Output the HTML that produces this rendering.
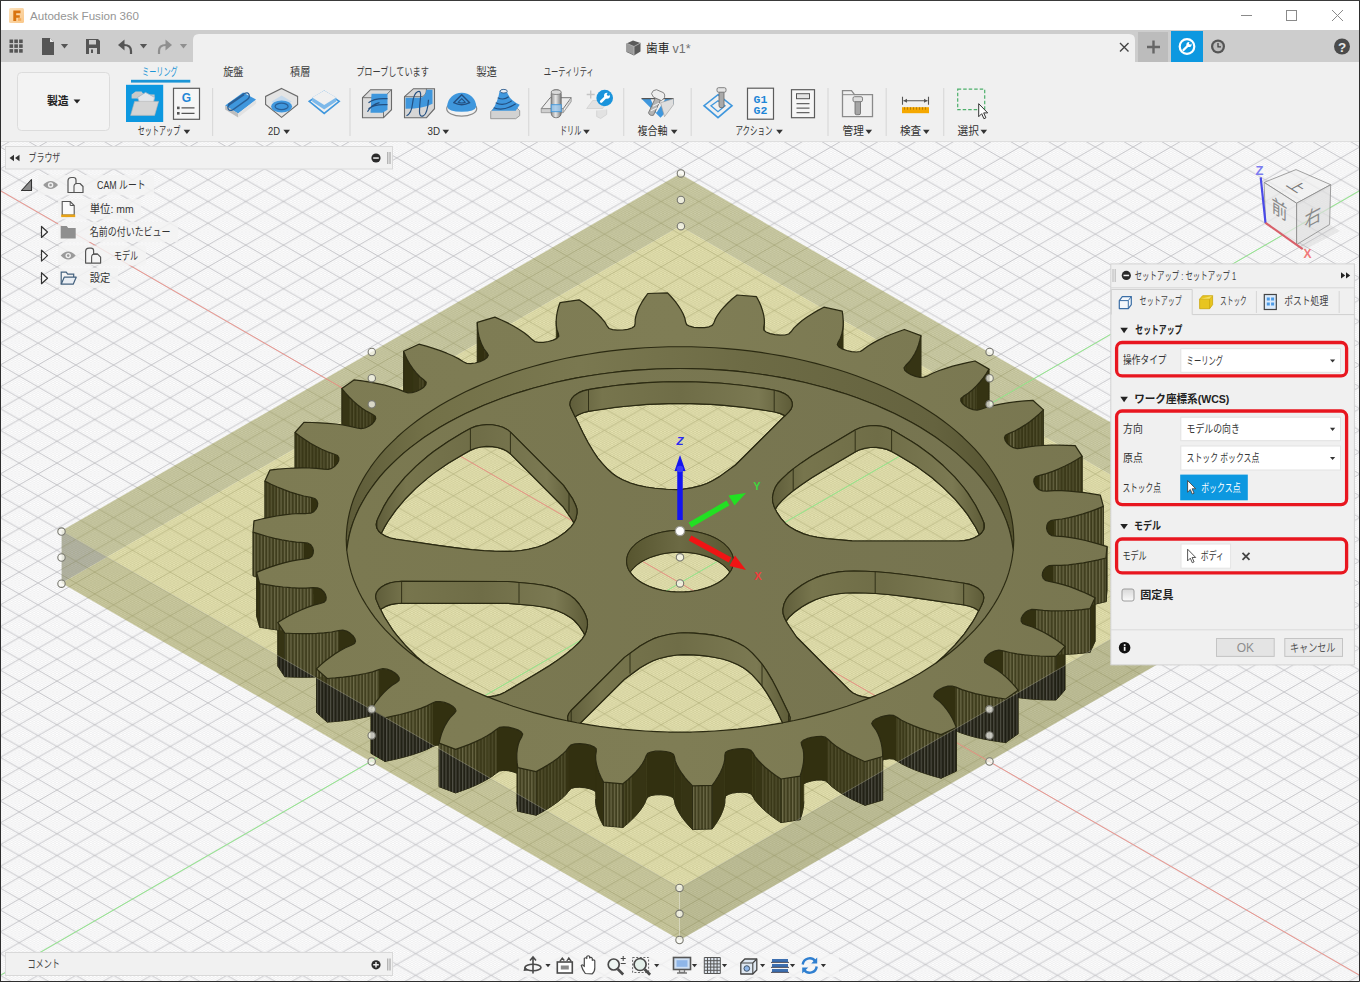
<!DOCTYPE html><html><head><meta charset="utf-8"><title>Autodesk Fusion 360</title><style>html,body{margin:0;padding:0;width:1360px;height:982px;overflow:hidden;background:#fff;font-family:"Liberation Sans",sans-serif}</style></head><body><svg width="1360" height="982" viewBox="0 0 1360 982" style="position:absolute;left:0;top:0;display:block"><defs>
<pattern id="gmin2" width="3.7760" height="2.1800" patternUnits="userSpaceOnUse" patternTransform="translate(680.00,583.00)"><path d="M0 0L3.7760 2.1800M0 2.1800L3.7760 0" stroke="#8a8a50" stroke-opacity=".3" stroke-width=".5" fill="none"/></pattern><pattern id="gmaj2" width="37.7600" height="21.8000" patternUnits="userSpaceOnUse" patternTransform="translate(680.00,583.00)"><path d="M0 0L37.7600 21.8000M0 21.8000L37.7600 0" stroke="#77773c" stroke-opacity=".27" stroke-width=".9" fill="none"/></pattern><pattern id="gmin" width="3.7760" height="2.1800" patternUnits="userSpaceOnUse" patternTransform="translate(680.00,583.00)"><path d="M0 0L3.7760 2.1800M0 2.1800L3.7760 0" stroke="#e2e2e4" stroke-width=".45" fill="none"/></pattern><pattern id="gmaj" width="37.7600" height="21.8000" patternUnits="userSpaceOnUse" patternTransform="translate(680.00,583.00)"><path d="M0 0L37.7600 21.8000M0 21.8000L37.7600 0" stroke="#c0c0c4" stroke-width=".9" fill="none"/></pattern>
<pattern id="stripe1" width="3.3" height="8" patternUnits="userSpaceOnUse"><rect x="0" y="0" width="1.2" height="8" fill="#c8c6a0" fill-opacity=".16"/></pattern>
<pattern id="stripe3" width="3.3" height="8" patternUnits="userSpaceOnUse"><rect x="0" y="0" width="1.1" height="8" fill="#d8d8d0" fill-opacity=".2"/></pattern>
<pattern id="stripe2" width="3.3" height="8" patternUnits="userSpaceOnUse"><rect x="0" y="0" width="1.2" height="8" fill="#c8c6a0" fill-opacity=".32"/></pattern>
<linearGradient id="gtop" gradientUnits="userSpaceOnUse" x1="250" y1="0" x2="1110" y2="0"><stop offset="0" stop-color="#7d7b53"/><stop offset=".5" stop-color="#7f7d55"/><stop offset="1" stop-color="#787650"/></linearGradient>
<linearGradient id="gfl" gradientUnits="userSpaceOnUse" x1="350" y1="0" x2="1010" y2="0"><stop offset="0" stop-color="#7b7951"/><stop offset="1" stop-color="#767450"/></linearGradient>
<linearGradient id="gpw" gradientUnits="userSpaceOnUse" x1="346" y1="0" x2="1014" y2="0"><stop offset="0" stop-color="#5d5b38"/><stop offset=".12" stop-color="#737148"/><stop offset=".35" stop-color="#7a7850"/><stop offset=".6" stop-color="#6d6b45"/><stop offset=".88" stop-color="#65633f"/><stop offset="1" stop-color="#54522f"/></linearGradient>
<linearGradient id="ghw" gradientUnits="userSpaceOnUse" x1="626" y1="0" x2="734" y2="0"><stop offset="0" stop-color="#57552f"/><stop offset=".5" stop-color="#6c6a44"/><stop offset="1" stop-color="#5a5832"/></linearGradient>
<linearGradient id="gw0" gradientUnits="userSpaceOnUse" x1="569" y1="0" x2="792" y2="0"><stop offset="0" stop-color="#5f5d3a"/><stop offset=".15" stop-color="#77754d"/><stop offset=".5" stop-color="#6f6d47"/><stop offset=".85" stop-color="#7b7952"/><stop offset="1" stop-color="#5e5c38"/></linearGradient>
<linearGradient id="gw1" gradientUnits="userSpaceOnUse" x1="376" y1="0" x2="577" y2="0"><stop offset="0" stop-color="#5f5d3a"/><stop offset=".15" stop-color="#77754d"/><stop offset=".5" stop-color="#6f6d47"/><stop offset=".85" stop-color="#7b7952"/><stop offset="1" stop-color="#5e5c38"/></linearGradient>
<linearGradient id="gw2" gradientUnits="userSpaceOnUse" x1="375" y1="0" x2="587" y2="0"><stop offset="0" stop-color="#5f5d3a"/><stop offset=".15" stop-color="#77754d"/><stop offset=".5" stop-color="#6f6d47"/><stop offset=".85" stop-color="#7b7952"/><stop offset="1" stop-color="#5e5c38"/></linearGradient>
<linearGradient id="gw3" gradientUnits="userSpaceOnUse" x1="567" y1="0" x2="790" y2="0"><stop offset="0" stop-color="#5f5d3a"/><stop offset=".15" stop-color="#77754d"/><stop offset=".5" stop-color="#6f6d47"/><stop offset=".85" stop-color="#7b7952"/><stop offset="1" stop-color="#5e5c38"/></linearGradient>
<linearGradient id="gw4" gradientUnits="userSpaceOnUse" x1="782" y1="0" x2="983" y2="0"><stop offset="0" stop-color="#5f5d3a"/><stop offset=".15" stop-color="#77754d"/><stop offset=".5" stop-color="#6f6d47"/><stop offset=".85" stop-color="#7b7952"/><stop offset="1" stop-color="#5e5c38"/></linearGradient>
<linearGradient id="gw5" gradientUnits="userSpaceOnUse" x1="772" y1="0" x2="984" y2="0"><stop offset="0" stop-color="#5f5d3a"/><stop offset=".15" stop-color="#77754d"/><stop offset=".5" stop-color="#6f6d47"/><stop offset=".85" stop-color="#7b7952"/><stop offset="1" stop-color="#5e5c38"/></linearGradient>
</defs>
<rect x="0" y="0" width="1360" height="982" fill="#fff"/>
<rect x="0" y="0" width="1360" height="982" fill="url(#gmin)"/>
<rect x="0" y="0" width="1360" height="982" fill="url(#gmaj)"/>
<path d="M680 887.8 1253.2 556.9 680 226 106.8 556.9Z" fill="#e2dfa9" fill-opacity="0.90"/>
<path d="M61.6 530.8 106.8 556.9 680 226 680 173.8Z" fill="#c4c49c" fill-opacity="0.90"/>
<path d="M1298.4 530.8 680 173.8 680 226 1253.2 556.9Z" fill="#c7c79e" fill-opacity="0.90"/>
<path d="M680 887.8 106.8 556.9 61.6 583 680 940Z" fill="#c5c498" fill-opacity="0.90"/>
<path d="M680 887.8 680 940 1298.4 583 1253.2 556.9Z" fill="#b9b990" fill-opacity="0.90"/>
<path d="M61.6 530.8 61.6 583 106.8 556.9Z" fill="#acad9e" fill-opacity="0.90"/>
<path d="M1253.2 556.9 1298.4 583 1298.4 530.8Z" fill="#a5a695" fill-opacity="0.90"/>
<path d="M680 173.8 61.6 530.8 61.6 583 680 940 1298.4 583 1298.4 530.8Z" fill="url(#gmin2)"/><path d="M680 173.8 61.6 530.8 61.6 583 680 940 1298.4 583 1298.4 530.8Z" fill="url(#gmaj2)"/>
<path d="M-20 178.9L1380 987.1" stroke="#ef8e86" stroke-width=".9"/>
<path d="M-20 987.1L1380 178.9" stroke="#93ea8c" stroke-width="1"/>
<g stroke-linejoin="round">
<path d="M763.7 327.6 764.4 323.3 764.4 366.9 763.7 371.2Z" fill="#323010" stroke="#323010" stroke-width=".6"/>
<path d="M764.4 366.9 763.7 371.2" fill="none" stroke="#2b2a12" stroke-width=".9"/>
<path d="M556.2 320.9 556.3 325.3 556.9 329.6 558.4 333.8 558.4 377.4 556.9 373.2 556.3 368.9 556.2 364.5Z" fill="#323010" stroke="#323010" stroke-width=".6"/>
<path d="M558.4 377.4 556.9 373.2 556.3 368.9 556.2 364.5" fill="none" stroke="#2b2a12" stroke-width=".9"/>
<path d="M838.2 342.2 840.4 338.2 841.8 334 842.7 329.6 843.2 325.1 843.2 320.6 843.2 364.2 843.2 368.7 842.7 373.2 841.8 377.6 840.4 381.8 838.2 385.8Z" fill="#333111" stroke="#333111" stroke-width=".6"/>
<path d="M843.2 364.2 843.2 368.7 842.7 373.2 841.8 377.6 840.4 381.8 838.2 385.8" fill="none" stroke="#2b2a12" stroke-width=".9"/>
<path d="M558.4 333.8 558.8 336.3 558.8 379.9 558.4 377.4Z" fill="#323010" stroke="#323010" stroke-width=".6"/>
<path d="M558.8 379.9 558.4 377.4" fill="none" stroke="#2b2a12" stroke-width=".9"/>
<path d="M477.3 322.3 477.5 327 478 331.6 478.9 336.2 480.2 340.6 481.9 344.9 484.1 349 484.1 392.6 481.9 388.5 480.2 384.2 478.9 379.8 478 375.2 477.5 370.6 477.3 365.9Z" fill="#323010" stroke="#323010" stroke-width=".6"/>
<path d="M484.1 392.6 481.9 388.5 480.2 384.2 478.9 379.8 478 375.2 477.5 370.6 477.3 365.9M477.3 322.3L477.3 365.9" fill="none" stroke="#2b2a12" stroke-width=".9"/>
<path d="M837.3 344.7 838.2 342.2 838.2 385.8 837.3 388.3Z" fill="#323010" stroke="#323010" stroke-width=".6"/>
<path d="M838.2 385.8 837.3 388.3" fill="none" stroke="#2b2a12" stroke-width=".9"/>
<path d="M484.1 349 487 352.9 487 396.5 484.1 392.6Z" fill="#363414" stroke="#363414" stroke-width=".6"/>
<path d="M487 396.5 484.1 392.6" fill="none" stroke="#2b2a12" stroke-width=".9"/>
<path d="M905.7 365.5 909.3 361.8 912.2 357.9 914.7 353.7 916.8 349.4 918.5 345 919.8 340.4 920.9 335.7 920.9 379.3 919.8 384 918.5 388.6 916.8 393 914.7 397.3 912.2 401.5 909.3 405.4 905.7 409.1Z" fill="#363414" stroke="#363414" stroke-width=".6"/>
<path d="M920.9 379.3 919.8 384 918.5 388.6 916.8 393 914.7 397.3 912.2 401.5 909.3 405.4 905.7 409.1M920.9 335.7L920.9 379.3" fill="none" stroke="#2b2a12" stroke-width=".9"/>
<path d="M487 352.9 488.3 355.3 488.3 398.9 487 396.5Z" fill="#323010" stroke="#323010" stroke-width=".6"/>
<path d="M488.3 398.9 487 396.5" fill="none" stroke="#2b2a12" stroke-width=".9"/>
<path d="M403.6 351.3 405.5 355.9 407.6 360.4 410.1 364.7 413 368.9 413 412.5 410.1 408.3 407.6 404 405.5 399.5 403.6 394.9Z" fill="#343212" stroke="#343212" stroke-width=".6"/>
<path d="M413 412.5 410.1 408.3 407.6 404 405.5 399.5 403.6 394.9M403.6 351.3L403.6 394.9" fill="none" stroke="#2b2a12" stroke-width=".9"/>
<path d="M904 367.9 905.7 365.5 905.7 409.1 904 411.5Z" fill="#323010" stroke="#323010" stroke-width=".6"/>
<path d="M905.7 409.1 904 411.5" fill="none" stroke="#2b2a12" stroke-width=".9"/>
<path d="M413 368.9 416.2 372.9 419.8 376.7 419.8 420.3 416.2 416.5 413 412.5Z" fill="#373515" stroke="#373515" stroke-width=".6"/>
<path d="M419.8 420.3 416.2 416.5 413 412.5" fill="none" stroke="#2b2a12" stroke-width=".9"/>
<path d="M976.4 385.9 980 382 983.3 377.8 986.3 373.5 989 369.1 989 412.7 986.3 417.1 983.3 421.4 980 425.6 976.4 429.5Z" fill="#353313" stroke="#353313" stroke-width=".6"/>
<path d="M989 412.7 986.3 417.1 983.3 421.4 980 425.6 976.4 429.5M989 369.1L989 412.7" fill="none" stroke="#2b2a12" stroke-width=".9"/>
<path d="M419.8 376.7 424 380.1 424 423.7 419.8 420.3Z" fill="#3a3818" stroke="#3a3818" stroke-width=".6"/>
<path d="M424 423.7 419.8 420.3" fill="none" stroke="#2b2a12" stroke-width=".9"/>
<path d="M424 380.1 426.2 382.3 426.2 425.9 424 423.7Z" fill="#323010" stroke="#323010" stroke-width=".6"/>
<path d="M426.2 425.9 424 423.7" fill="none" stroke="#2b2a12" stroke-width=".9"/>
<path d="M963.4 396.4 968.2 393.3 972.5 389.7 976.4 385.9 976.4 429.5 972.5 433.3 968.2 436.9 963.4 440Z" fill="#393717" stroke="#393717" stroke-width=".6"/>
<path d="M976.4 429.5 972.5 433.3 968.2 436.9 963.4 440" fill="none" stroke="#2b2a12" stroke-width=".9"/>
<path d="M341.9 388.6 345.4 392.9 349.1 397 349.1 440.6 345.4 436.5 341.9 432.2Z" fill="#373515" stroke="#373515" stroke-width=".6"/>
<path d="M349.1 440.6 345.4 436.5 341.9 432.2M341.9 388.6L341.9 432.2" fill="none" stroke="#2b2a12" stroke-width=".9"/>
<path d="M960.8 400.9 960.9 398.5 963.4 396.4 963.4 440 960.9 442.1 960.8 444.5Z" fill="#323010" stroke="#323010" stroke-width=".6"/>
<path d="M963.4 440 960.9 442.1 960.8 444.5" fill="none" stroke="#2b2a12" stroke-width=".9"/>
<path d="M349.1 397 353.1 400.9 357.4 404.7 357.4 448.3 353.1 444.5 349.1 440.6Z" fill="#383616" stroke="#383616" stroke-width=".6"/>
<path d="M357.4 448.3 353.1 444.5 349.1 440.6" fill="none" stroke="#2b2a12" stroke-width=".9"/>
<path d="M357.4 404.7 362 408.2 366.9 411.4 372.3 414.3 372.3 457.9 366.9 455 362 451.8 357.4 448.3Z" fill="#3a3818" stroke="#3a3818" stroke-width=".6"/>
<path d="M372.3 457.9 366.9 455 362 451.8 357.4 448.3" fill="none" stroke="#2b2a12" stroke-width=".9"/>
<path d="M372.3 414.3 375.2 416.2 375.7 418.6 375.7 462.2 375.2 459.8 372.3 457.9Z" fill="#323010" stroke="#323010" stroke-width=".6"/>
<path d="M375.7 462.2 375.2 459.8 372.3 457.9" fill="none" stroke="#2b2a12" stroke-width=".9"/>
<path d="M1020 428.1 1025.2 424.9 1030.1 421.4 1034.8 417.8 1039.3 413.9 1043.5 409.9 1043.5 453.5 1039.3 457.5 1034.8 461.4 1030.1 465 1025.2 468.5 1020 471.7Z" fill="#393717" stroke="#393717" stroke-width=".6"/>
<path d="M1043.5 453.5 1039.3 457.5 1034.8 461.4 1030.1 465 1025.2 468.5 1020 471.7M1043.5 409.9L1043.5 453.5" fill="none" stroke="#2b2a12" stroke-width=".9"/>
<path d="M1014.6 431 1020 428.1 1020 471.7 1014.6 474.6Z" fill="#3b3919" stroke="#3b3919" stroke-width=".6"/>
<path d="M1020 471.7 1014.6 474.6" fill="none" stroke="#2b2a12" stroke-width=".9"/>
<path d="M1008.7 433.6 1014.6 431 1014.6 474.6 1008.7 477.2Z" fill="#3c3a1a" stroke="#3c3a1a" stroke-width=".6"/>
<path d="M1014.6 474.6 1008.7 477.2" fill="none" stroke="#2b2a12" stroke-width=".9"/>
<path d="M1004.5 437.6 1005.5 435.3 1008.7 433.6 1008.7 477.2 1005.5 478.9 1004.5 481.2Z" fill="#323010" stroke="#323010" stroke-width=".6"/>
<path d="M1008.7 477.2 1005.5 478.9 1004.5 481.2" fill="none" stroke="#2b2a12" stroke-width=".9"/>
<path d="M295 432.5 299.9 436.3 305.1 439.8 310.4 443.2 315.9 446.3 321.7 449.2 321.7 492.8 315.9 489.9 310.4 486.8 305.1 483.4 299.9 479.9 295 476.1Z" fill="#3a3818" stroke="#3a3818" stroke-width=".6"/>
<path d="M321.7 492.8 315.9 489.9 310.4 486.8 305.1 483.4 299.9 479.9 295 476.1M295 432.5L295 476.1" fill="none" stroke="#2b2a12" stroke-width=".9"/>
<path d="M321.7 449.2 327.6 451.8 327.6 495.4 321.7 492.8Z" fill="#3f3d1d" stroke="#3f3d1d" stroke-width=".6"/>
<path d="M327.6 495.4 321.7 492.8" fill="none" stroke="#2b2a12" stroke-width=".9"/>
<path d="M327.6 451.8 333.9 454 333.9 497.6 327.6 495.4Z" fill="#403e1e" stroke="#403e1e" stroke-width=".6"/>
<path d="M333.9 497.6 327.6 495.4" fill="none" stroke="#2b2a12" stroke-width=".9"/>
<path d="M333.9 454 337.5 455.5 338.8 457.7 338.8 501.3 337.5 499.1 333.9 497.6Z" fill="#323010" stroke="#323010" stroke-width=".6"/>
<path d="M338.8 501.3 337.5 499.1 333.9 497.6" fill="none" stroke="#2b2a12" stroke-width=".9"/>
<path d="M1076.6 459.8 1082.2 456.3 1082.2 499.9 1076.6 503.4Z" fill="#3a3818" stroke="#3a3818" stroke-width=".6"/>
<path d="M1082.2 499.9 1076.6 503.4M1082.2 456.3L1082.2 499.9" fill="none" stroke="#2b2a12" stroke-width=".9"/>
<path d="M1058.9 468.8 1065 466 1070.9 463 1076.6 459.8 1076.6 503.4 1070.9 506.6 1065 509.6 1058.9 512.4Z" fill="#3c3a1a" stroke="#3c3a1a" stroke-width=".6"/>
<path d="M1076.6 503.4 1070.9 506.6 1065 509.6 1058.9 512.4" fill="none" stroke="#2b2a12" stroke-width=".9"/>
<path d="M1046.3 473.6 1052.7 471.4 1058.9 468.8 1058.9 512.4 1052.7 515 1046.3 517.2Z" fill="#3e3c1c" stroke="#3e3c1c" stroke-width=".6"/>
<path d="M1058.9 512.4 1052.7 515 1046.3 517.2" fill="none" stroke="#2b2a12" stroke-width=".9"/>
<path d="M1039.6 475.3 1046.3 473.6 1046.3 517.2 1039.6 518.9Z" fill="#3f3d1d" stroke="#3f3d1d" stroke-width=".6"/>
<path d="M1046.3 517.2 1039.6 518.9" fill="none" stroke="#2b2a12" stroke-width=".9"/>
<path d="M1033.8 481.5 1034.1 478.8 1035.8 476.7 1039.6 475.3 1039.6 518.9 1035.8 520.3 1034.1 522.4 1033.8 525.1Z" fill="#323010" stroke="#323010" stroke-width=".6"/>
<path d="M1039.6 518.9 1035.8 520.3 1034.1 522.4 1033.8 525.1" fill="none" stroke="#2b2a12" stroke-width=".9"/>
<path d="M264.9 481.1 271.1 484.2 271.1 527.8 264.9 524.7Z" fill="#3e3c1c" stroke="#3e3c1c" stroke-width=".6"/>
<path d="M271.1 527.8 264.9 524.7M264.9 481.1L264.9 524.7" fill="none" stroke="#2b2a12" stroke-width=".9"/>
<path d="M271.1 484.2 277.4 487 277.4 530.6 271.1 527.8Z" fill="#3e3c1c" stroke="#3e3c1c" stroke-width=".6"/>
<path d="M277.4 530.6 271.1 527.8" fill="none" stroke="#2b2a12" stroke-width=".9"/>
<path d="M277.4 487 283.9 489.7 290.4 492.1 297 494.2 303.8 496 310.8 497.4 310.8 541 303.8 539.6 297 537.8 290.4 535.7 283.9 533.3 277.4 530.6Z" fill="#3f3d1d" stroke="#3f3d1d" stroke-width=".6"/>
<path d="M310.8 541 303.8 539.6 297 537.8 290.4 535.7 283.9 533.3 277.4 530.6" fill="none" stroke="#2b2a12" stroke-width=".9"/>
<path d="M310.8 497.4 314.7 498.5 316.8 500.5 317.7 503.2 317.7 546.8 316.8 544.1 314.7 542.1 310.8 541Z" fill="#323010" stroke="#323010" stroke-width=".6"/>
<path d="M317.7 546.8 316.8 544.1 314.7 542.1 310.8 541" fill="none" stroke="#2b2a12" stroke-width=".9"/>
<path d="M1089.9 511.6 1096.6 509.1 1103.4 506.4 1103.4 550 1096.6 552.7 1089.9 555.2Z" fill="#3d3b1b" stroke="#3d3b1b" stroke-width=".6"/>
<path d="M1103.4 550 1096.6 552.7 1089.9 555.2M1103.4 506.4L1103.4 550" fill="none" stroke="#2b2a12" stroke-width=".9"/>
<path d="M1054.8 519.9 1062 519 1069 517.6 1076 515.9 1083 513.9 1089.9 511.6 1089.9 555.2 1083 557.5 1076 559.5 1069 561.2 1062 562.6 1054.8 563.5Z" fill="#413f1f" stroke="#413f1f" stroke-width=".6"/>
<path d="M1089.9 555.2 1083 557.5 1076 559.5 1069 561.2 1062 562.6 1054.8 563.5" fill="none" stroke="#2b2a12" stroke-width=".9"/>
<path d="M1046.6 528.3 1046.9 525.3 1048.2 522.6 1050.7 520.7 1054.8 519.9 1054.8 563.5 1050.7 564.3 1048.2 566.2 1046.9 568.9 1046.6 571.9Z" fill="#323010" stroke="#323010" stroke-width=".6"/>
<path d="M1054.8 563.5 1050.7 564.3 1048.2 566.2 1046.9 568.9 1046.6 571.9" fill="none" stroke="#2b2a12" stroke-width=".9"/>
<path d="M253 532.2 260.2 534.4 267.4 536.5 274.6 538.3 281.9 539.9 281.9 583.5 274.6 581.9 267.4 580.1 260.2 578 253 575.8Z" fill="#403e1e" stroke="#403e1e" stroke-width=".6"/>
<path d="M281.9 583.5 274.6 581.9 267.4 580.1 260.2 578 253 575.8M253 532.2L253 575.8" fill="none" stroke="#2b2a12" stroke-width=".9"/>
<path d="M281.9 539.9 289.1 541.2 296.4 542.1 303.7 542.6 303.7 586.2 296.4 585.7 289.1 584.8 281.9 583.5Z" fill="#424020" stroke="#424020" stroke-width=".6"/>
<path d="M303.7 586.2 296.4 585.7 289.1 584.8 281.9 583.5" fill="none" stroke="#2b2a12" stroke-width=".9"/>
<path d="M303.7 542.6 308 543.2 310.8 544.9 312.6 547.5 313.4 550.5 313.4 594.1 312.6 591.1 310.8 588.5 308 586.8 303.7 586.2Z" fill="#323010" stroke="#323010" stroke-width=".6"/>
<path d="M313.4 594.1 312.6 591.1 310.8 588.5 308 586.8 303.7 586.2" fill="none" stroke="#2b2a12" stroke-width=".9"/>
<path d="M1106 558 1107 546.6 1107 590.2 1106 601.6Z" fill="#323010" stroke="#323010" stroke-width=".6"/>
<path d="M1107 590.2 1106 601.6M1106 558L1106 601.6M1107 546.6L1107 590.2" fill="none" stroke="#2b2a12" stroke-width=".9"/>
<path d="M1053.7 565.3 1061 565.3 1068.4 564.8 1075.9 563.9 1083.4 562.8 1090.9 561.4 1098.4 559.8 1106 558 1106 601.6 1098.4 603.4 1090.9 605 1083.4 606.4 1075.9 607.5 1068.4 608.4 1061 608.9 1053.7 608.9Z" fill="#424020" stroke="#424020" stroke-width=".6"/>
<path d="M1106 601.6 1098.4 603.4 1090.9 605 1083.4 606.4 1075.9 607.5 1068.4 608.4 1061 608.9 1053.7 608.9M1106 558L1106 601.6" fill="none" stroke="#2b2a12" stroke-width=".9"/>
<path d="M1042.3 575.6 1042.6 572.6 1044 569.6 1046.2 567.2 1049.3 565.6 1053.7 565.3 1053.7 608.9 1049.3 609.2 1046.2 610.8 1044 613.2 1042.6 616.2 1042.3 619.2Z" fill="#323010" stroke="#323010" stroke-width=".6"/>
<path d="M1053.7 608.9 1049.3 609.2 1046.2 610.8 1044 613.2 1042.6 616.2 1042.3 619.2" fill="none" stroke="#2b2a12" stroke-width=".9"/>
<path d="M256.6 572.4 259.7 583.6 259.7 627.2 256.6 616Z" fill="#333111" stroke="#333111" stroke-width=".6"/>
<path d="M259.7 627.2 256.6 616M256.6 572.4L256.6 616M259.7 583.6L259.7 627.2" fill="none" stroke="#2b2a12" stroke-width=".9"/>
<path d="M259.7 583.6 267.5 584.9 275.3 586.1 283.1 587 290.7 587.7 298.3 588.1 305.8 588.1 305.8 631.7 298.3 631.7 290.7 631.3 283.1 630.6 275.3 629.7 267.5 628.5 259.7 627.2Z" fill="#424020" stroke="#424020" stroke-width=".6"/>
<path d="M305.8 631.7 298.3 631.7 290.7 631.3 283.1 630.6 275.3 629.7 267.5 628.5 259.7 627.2M259.7 583.6L259.7 627.2" fill="none" stroke="#2b2a12" stroke-width=".9"/>
<path d="M305.8 588.1 313.1 587.7 313.1 631.3 305.8 631.7Z" fill="#424020" stroke="#424020" stroke-width=".6"/>
<path d="M313.1 631.3 305.8 631.7" fill="none" stroke="#2b2a12" stroke-width=".9"/>
<path d="M313.1 587.7 317.5 587.8 320.8 589.1 323.5 591.4 325.4 594.3 326.2 597.3 326.2 640.9 325.4 637.9 323.5 635 320.8 632.7 317.5 631.4 313.1 631.3Z" fill="#323010" stroke="#323010" stroke-width=".6"/>
<path d="M326.2 640.9 325.4 637.9 323.5 635 320.8 632.7 317.5 631.4 313.1 631.3" fill="none" stroke="#2b2a12" stroke-width=".9"/>
<path d="M1090 608.7 1095.1 597.7 1095.1 641.3 1090 652.3Z" fill="#333111" stroke="#333111" stroke-width=".6"/>
<path d="M1095.1 641.3 1090 652.3M1090 608.7L1090 652.3M1095.1 597.7L1095.1 641.3" fill="none" stroke="#2b2a12" stroke-width=".9"/>
<path d="M1058.4 610.9 1066.1 610.7 1074 610.3 1082 609.6 1090 608.7 1090 652.3 1082 653.2 1074 653.9 1066.1 654.3 1058.4 654.5Z" fill="#424020" stroke="#424020" stroke-width=".6"/>
<path d="M1090 652.3 1082 653.2 1074 653.9 1066.1 654.3 1058.4 654.5M1090 608.7L1090 652.3" fill="none" stroke="#2b2a12" stroke-width=".9"/>
<path d="M1036.2 609.6 1043.3 610.4 1050.8 610.8 1058.4 610.9 1058.4 654.5 1050.8 654.4 1043.3 654 1036.2 653.2Z" fill="#424020" stroke="#424020" stroke-width=".6"/>
<path d="M1058.4 654.5 1050.8 654.4 1043.3 654 1036.2 653.2" fill="none" stroke="#2b2a12" stroke-width=".9"/>
<path d="M1021.2 621.1 1021.3 618.3 1022.7 615.4 1025.1 612.6 1028.2 610.5 1031.8 609.4 1036.2 609.6 1036.2 653.2 1031.8 653 1028.2 654.1 1025.1 656.2 1022.7 659 1021.3 661.9 1021.2 664.7Z" fill="#323010" stroke="#323010" stroke-width=".6"/>
<path d="M1036.2 653.2 1031.8 653 1028.2 654.1 1025.1 656.2 1022.7 659 1021.3 661.9 1021.2 664.7" fill="none" stroke="#2b2a12" stroke-width=".9"/>
<path d="M277.8 622.5 284.8 633.1 284.8 676.7 277.8 666.1Z" fill="#363414" stroke="#363414" stroke-width=".6"/>
<path d="M284.8 676.7 277.8 666.1M277.8 622.5L277.8 666.1M284.8 633.1L284.8 676.7" fill="none" stroke="#2b2a12" stroke-width=".9"/>
<path d="M301 633.6 308.9 633.6 316.6 633.3 324.2 632.8 331.5 632 338.5 630.7 338.5 674.3 331.5 675.6 324.2 676.4 316.6 676.9 308.9 677.2 301 677.2Z" fill="#424020" stroke="#424020" stroke-width=".6"/>
<path d="M338.5 674.3 331.5 675.6 324.2 676.4 316.6 676.9 308.9 677.2 301 677.2" fill="none" stroke="#2b2a12" stroke-width=".9"/>
<path d="M284.8 633.1 293 633.5 301 633.6 301 677.2 293 677.1 284.8 676.7Z" fill="#424020" stroke="#424020" stroke-width=".6"/>
<path d="M301 677.2 293 677.1 284.8 676.7M284.8 633.1L284.8 676.7" fill="none" stroke="#2b2a12" stroke-width=".9"/>
<path d="M338.5 630.7 342.8 630.2 346.6 631.1 350 633.1 352.9 635.6 354.8 638.5 355.5 641.2 355.5 684.8 354.8 682.1 352.9 679.2 350 676.7 346.6 674.7 342.8 673.8 338.5 674.3Z" fill="#323010" stroke="#323010" stroke-width=".6"/>
<path d="M355.5 684.8 354.8 682.1 352.9 679.2 350 676.7 346.6 674.7 342.8 673.8 338.5 674.3" fill="none" stroke="#2b2a12" stroke-width=".9"/>
<path d="M1056.1 656.4 1065 646.3 1065 689.9 1056.1 700Z" fill="#353313" stroke="#353313" stroke-width=".6"/>
<path d="M1065 689.9 1056.1 700M1056.1 656.4L1056.1 700M1065 646.3L1065 689.9" fill="none" stroke="#2b2a12" stroke-width=".9"/>
<path d="M1003.1 650.8 1009.8 652.5 1009.8 696.1 1003.1 694.4Z" fill="#413f1f" stroke="#413f1f" stroke-width=".6"/>
<path d="M1009.8 696.1 1003.1 694.4" fill="none" stroke="#2b2a12" stroke-width=".9"/>
<path d="M984.3 660.2 985.5 657.6 987.9 654.8 991.2 652.5 995 650.8 998.9 650.1 1003.1 650.8 1003.1 694.4 998.9 693.7 995 694.4 991.2 696.1 987.9 698.4 985.5 701.2 984.3 703.8Z" fill="#323010" stroke="#323010" stroke-width=".6"/>
<path d="M1003.1 694.4 998.9 693.7 995 694.4 991.2 696.1 987.9 698.4 985.5 701.2 984.3 703.8" fill="none" stroke="#2b2a12" stroke-width=".9"/>
<path d="M1009.8 652.5 1017 653.8 1024.4 654.8 1032 655.5 1039.9 656 1047.9 656.3 1056.1 656.4 1056.1 700 1047.9 699.9 1039.9 699.6 1032 699.1 1024.4 698.4 1017 697.4 1009.8 696.1Z" fill="#424020" stroke="#424020" stroke-width=".6"/>
<path d="M1056.1 700 1047.9 699.9 1039.9 699.6 1032 699.1 1024.4 698.4 1017 697.4 1009.8 696.1M1056.1 656.4L1056.1 700" fill="none" stroke="#2b2a12" stroke-width=".9"/>
<path d="M378.9 669.7 382.9 668.7 386.9 669.2 391 670.6 394.7 672.8 397.6 675.3 399.2 677.9 399.2 721.5 397.6 718.9 394.7 716.4 391 714.2 386.9 712.8 382.9 712.3 378.9 713.3Z" fill="#323010" stroke="#323010" stroke-width=".6"/>
<path d="M399.2 721.5 397.6 718.9 394.7 716.4 391 714.2 386.9 712.8 382.9 712.3 378.9 713.3" fill="none" stroke="#2b2a12" stroke-width=".9"/>
<path d="M316.5 668.9 327.2 678.5 327.2 722.1 316.5 712.5Z" fill="#393717" stroke="#393717" stroke-width=".6"/>
<path d="M327.2 722.1 316.5 712.5M316.5 668.9L316.5 712.5M327.2 678.5L327.2 722.1" fill="none" stroke="#2b2a12" stroke-width=".9"/>
<path d="M327.2 678.5 335.3 677.9 343.2 677.1 350.9 676.1 358.4 674.9 365.6 673.5 372.5 671.8 378.9 669.7 378.9 713.3 372.5 715.4 365.6 717.1 358.4 718.5 350.9 719.7 343.2 720.7 335.3 721.5 327.2 722.1Z" fill="#424020" stroke="#424020" stroke-width=".6"/>
<path d="M378.9 713.3 372.5 715.4 365.6 717.1 358.4 718.5 350.9 719.7 343.2 720.7 335.3 721.5 327.2 722.1M327.2 678.5L327.2 722.1" fill="none" stroke="#2b2a12" stroke-width=".9"/>
<path d="M933.8 696.5 934.2 694.1 936.2 691.6 939.6 689.3 943.7 687.3 948 686.1 952 686 955.9 687.2 955.9 730.8 952 729.6 948 729.7 943.7 730.9 939.6 732.9 936.2 735.2 934.2 737.7 933.8 740.1Z" fill="#323010" stroke="#323010" stroke-width=".6"/>
<path d="M955.9 730.8 952 729.6 948 729.7 943.7 730.9 939.6 732.9 936.2 735.2 934.2 737.7 933.8 740.1" fill="none" stroke="#2b2a12" stroke-width=".9"/>
<path d="M955.9 687.2 961.9 689.6 968.4 691.7 975.3 693.6 982.5 695.2 990 696.6 990 740.2 982.5 738.8 975.3 737.2 968.4 735.3 961.9 733.2 955.9 730.8Z" fill="#3f3d1d" stroke="#3f3d1d" stroke-width=".6"/>
<path d="M990 740.2 982.5 738.8 975.3 737.2 968.4 735.3 961.9 733.2 955.9 730.8" fill="none" stroke="#2b2a12" stroke-width=".9"/>
<path d="M1005.7 699 1018.1 690.2 1018.1 733.8 1005.7 742.6Z" fill="#383616" stroke="#383616" stroke-width=".6"/>
<path d="M1018.1 733.8 1005.7 742.6M1005.7 699L1005.7 742.6M1018.1 690.2L1018.1 733.8" fill="none" stroke="#2b2a12" stroke-width=".9"/>
<path d="M990 696.6 997.8 697.9 1005.7 699 1005.7 742.6 997.8 741.5 990 740.2Z" fill="#424020" stroke="#424020" stroke-width=".6"/>
<path d="M1005.7 742.6 997.8 741.5 990 740.2M1005.7 699L1005.7 742.6" fill="none" stroke="#2b2a12" stroke-width=".9"/>
<path d="M426.9 705.8 432.4 703 432.4 746.6 426.9 749.4Z" fill="#3b3919" stroke="#3b3919" stroke-width=".6"/>
<path d="M432.4 746.6 426.9 749.4" fill="none" stroke="#2b2a12" stroke-width=".9"/>
<path d="M432.4 703 436 701.6 440 701.5 444.5 702.4 449 704.1 452.7 706.3 455.2 708.6 456 710.9 456 754.5 455.2 752.2 452.7 749.9 449 747.7 444.5 746 440 745.1 436 745.2 432.4 746.6Z" fill="#323010" stroke="#323010" stroke-width=".6"/>
<path d="M456 754.5 455.2 752.2 452.7 749.9 449 747.7 444.5 746 440 745.1 436 745.2 432.4 746.6" fill="none" stroke="#2b2a12" stroke-width=".9"/>
<path d="M414.2 710.5 420.7 708.3 426.9 705.8 426.9 749.4 420.7 751.9 414.2 754.1Z" fill="#3e3c1c" stroke="#3e3c1c" stroke-width=".6"/>
<path d="M426.9 749.4 420.7 751.9 414.2 754.1" fill="none" stroke="#2b2a12" stroke-width=".9"/>
<path d="M371 709.7 385 717.8 385 761.4 371 753.3Z" fill="#3c3a1a" stroke="#3c3a1a" stroke-width=".6"/>
<path d="M385 761.4 371 753.3M371 709.7L371 753.3M385 717.8L385 761.4" fill="none" stroke="#2b2a12" stroke-width=".9"/>
<path d="M385 717.8 392.7 716.2 400.1 714.5 407.3 712.6 414.2 710.5 414.2 754.1 407.3 756.2 400.1 758.1 392.7 759.8 385 761.4Z" fill="#403e1e" stroke="#403e1e" stroke-width=".6"/>
<path d="M414.2 754.1 407.3 756.2 400.1 758.1 392.7 759.8 385 761.4M385 717.8L385 761.4" fill="none" stroke="#2b2a12" stroke-width=".9"/>
<path d="M871.7 723.5 872.9 721.3 875.8 719.1 880 717.2 884.7 715.8 889.3 715.1 893.3 715.4 896.6 717.1 896.6 760.7 893.3 759 889.3 758.7 884.7 759.4 880 760.8 875.8 762.7 872.9 764.9 871.7 767.1Z" fill="#323010" stroke="#323010" stroke-width=".6"/>
<path d="M896.6 760.7 893.3 759 889.3 758.7 884.7 759.4 880 760.8 875.8 762.7 872.9 764.9 871.7 767.1" fill="none" stroke="#2b2a12" stroke-width=".9"/>
<path d="M896.6 717.1 901.6 720.2 907.3 723 907.3 766.6 901.6 763.8 896.6 760.7Z" fill="#3c3a1a" stroke="#3c3a1a" stroke-width=".6"/>
<path d="M907.3 766.6 901.6 763.8 896.6 760.7" fill="none" stroke="#2b2a12" stroke-width=".9"/>
<path d="M907.3 723 913.3 725.6 919.8 728.1 926.6 730.4 933.7 732.6 941.1 734.6 941.1 778.2 933.7 776.2 926.6 774 919.8 771.7 913.3 769.2 907.3 766.6Z" fill="#3f3d1d" stroke="#3f3d1d" stroke-width=".6"/>
<path d="M941.1 778.2 933.7 776.2 926.6 774 919.8 771.7 913.3 769.2 907.3 766.6M941.1 734.6L941.1 778.2" fill="none" stroke="#2b2a12" stroke-width=".9"/>
<path d="M496.7 729.2 499.7 727.3 503.7 726.8 508.4 727.1 513.3 728.3 517.8 729.9 521.1 731.9 522.7 734.1 522.7 777.7 521.1 775.5 517.8 773.5 513.3 771.9 508.4 770.7 503.7 770.4 499.7 770.9 496.7 772.8Z" fill="#323010" stroke="#323010" stroke-width=".6"/>
<path d="M522.7 777.7 521.1 775.5 517.8 773.5 513.3 771.9 508.4 770.7 503.7 770.4 499.7 770.9 496.7 772.8" fill="none" stroke="#2b2a12" stroke-width=".9"/>
<path d="M941.1 734.6 956.4 727.5 956.4 771.1 941.1 778.2Z" fill="#3c3a1a" stroke="#3c3a1a" stroke-width=".6"/>
<path d="M956.4 771.1 941.1 778.2M941.1 734.6L941.1 778.2M956.4 727.5L956.4 771.1" fill="none" stroke="#2b2a12" stroke-width=".9"/>
<path d="M487.2 735.7 492.3 732.6 496.7 729.2 496.7 772.8 492.3 776.2 487.2 779.3Z" fill="#393717" stroke="#393717" stroke-width=".6"/>
<path d="M496.7 772.8 492.3 776.2 487.2 779.3" fill="none" stroke="#2b2a12" stroke-width=".9"/>
<path d="M801.2 742.5 803.2 740.4 806.8 738.7 811.6 737.3 816.7 736.5 821.5 736.4 825.3 737.2 827.9 739.2 827.9 782.8 825.3 780.8 821.5 780 816.7 780.1 811.6 780.9 806.8 782.3 803.2 784 801.2 786.1Z" fill="#323010" stroke="#323010" stroke-width=".6"/>
<path d="M827.9 782.8 825.3 780.8 821.5 780 816.7 780.1 811.6 780.9 806.8 782.3 803.2 784 801.2 786.1" fill="none" stroke="#2b2a12" stroke-width=".9"/>
<path d="M475.7 741.6 481.7 738.7 487.2 735.7 487.2 779.3 481.7 782.3 475.7 785.2Z" fill="#3c3a1a" stroke="#3c3a1a" stroke-width=".6"/>
<path d="M487.2 779.3 481.7 782.3 475.7 785.2" fill="none" stroke="#2b2a12" stroke-width=".9"/>
<path d="M827.9 739.2 831.7 742.8 831.7 786.4 827.9 782.8Z" fill="#383616" stroke="#383616" stroke-width=".6"/>
<path d="M831.7 786.4 827.9 782.8" fill="none" stroke="#2b2a12" stroke-width=".9"/>
<path d="M455.6 749.3 462.6 746.8 469.3 744.3 475.7 741.6 475.7 785.2 469.3 787.9 462.6 790.4 455.6 792.9Z" fill="#3e3c1c" stroke="#3e3c1c" stroke-width=".6"/>
<path d="M475.7 785.2 469.3 787.9 462.6 790.4 455.6 792.9M455.6 749.3L455.6 792.9" fill="none" stroke="#2b2a12" stroke-width=".9"/>
<path d="M569 747 571.3 744.8 575 743.8 579.8 743.6 585 744.1 589.9 745.2 593.9 746.8 596.2 748.7 596.3 751.2 596.3 794.8 596.2 792.3 593.9 790.4 589.9 788.8 585 787.7 579.8 787.2 575 787.4 571.3 788.4 569 790.6Z" fill="#323010" stroke="#323010" stroke-width=".6"/>
<path d="M596.3 794.8 596.2 792.3 593.9 790.4 589.9 788.8 585 787.7 579.8 787.2 575 787.4 571.3 788.4 569 790.6" fill="none" stroke="#2b2a12" stroke-width=".9"/>
<path d="M439.1 743.1 455.6 749.3 455.6 792.9 439.1 786.7Z" fill="#403e1e" stroke="#403e1e" stroke-width=".6"/>
<path d="M455.6 792.9 439.1 786.7M439.1 743.1L439.1 786.7M455.6 749.3L455.6 792.9" fill="none" stroke="#2b2a12" stroke-width=".9"/>
<path d="M566 750.9 569 747 569 790.6 566 794.5Z" fill="#353313" stroke="#353313" stroke-width=".6"/>
<path d="M569 790.6 566 794.5" fill="none" stroke="#2b2a12" stroke-width=".9"/>
<path d="M724.9 755.1 725.5 752.6 728.1 750.8 732.3 749.5 737.4 748.8 742.7 748.6 747.4 749.1 750.9 750.3 752.8 752.6 752.8 796.2 750.9 793.9 747.4 792.7 742.7 792.2 737.4 792.4 732.3 793.1 728.1 794.4 725.5 796.2 724.9 798.7Z" fill="#323010" stroke="#323010" stroke-width=".6"/>
<path d="M752.8 796.2 750.9 793.9 747.4 792.7 742.7 792.2 737.4 792.4 732.3 793.1 728.1 794.4 725.5 796.2 724.9 798.7" fill="none" stroke="#2b2a12" stroke-width=".9"/>
<path d="M831.7 742.8 836.2 746.3 841.2 749.6 846.6 752.8 852.4 755.9 858.6 758.8 858.6 802.4 852.4 799.5 846.6 796.4 841.2 793.2 836.2 789.9 831.7 786.4Z" fill="#3a3818" stroke="#3a3818" stroke-width=".6"/>
<path d="M858.6 802.4 852.4 799.5 846.6 796.4 841.2 793.2 836.2 789.9 831.7 786.4" fill="none" stroke="#2b2a12" stroke-width=".9"/>
<path d="M646.2 755.8 647.7 753.4 650.9 752 655.5 751.2 660.8 751.1 666 751.5 670.4 752.6 673.4 754.2 674.4 756.7 674.4 800.3 673.4 797.8 670.4 796.2 666 795.1 660.8 794.7 655.5 794.8 650.9 795.6 647.7 797 646.2 799.4Z" fill="#323010" stroke="#323010" stroke-width=".6"/>
<path d="M674.4 800.3 673.4 797.8 670.4 796.2 666 795.1 660.8 794.7 655.5 794.8 650.9 795.6 647.7 797 646.2 799.4" fill="none" stroke="#2b2a12" stroke-width=".9"/>
<path d="M752.8 752.6 755.1 756.6 755.1 800.2 752.8 796.2Z" fill="#353313" stroke="#353313" stroke-width=".6"/>
<path d="M755.1 800.2 752.8 796.2" fill="none" stroke="#2b2a12" stroke-width=".9"/>
<path d="M865.1 761.7 882.7 756.5 882.7 800.1 865.1 805.3Z" fill="#3f3d1d" stroke="#3f3d1d" stroke-width=".6"/>
<path d="M882.7 800.1 865.1 805.3M865.1 761.7L865.1 805.3M882.7 756.5L882.7 800.1" fill="none" stroke="#2b2a12" stroke-width=".9"/>
<path d="M542.1 768.4 547.7 765.1 552.9 761.7 557.8 758.2 562.1 754.6 566 750.9 566 794.5 562.1 798.2 557.8 801.8 552.9 805.3 547.7 808.7 542.1 812Z" fill="#3a3818" stroke="#3a3818" stroke-width=".6"/>
<path d="M566 794.5 562.1 798.2 557.8 801.8 552.9 805.3 547.7 808.7 542.1 812" fill="none" stroke="#2b2a12" stroke-width=".9"/>
<path d="M858.6 758.8 865.1 761.7 865.1 805.3 858.6 802.4Z" fill="#3f3d1d" stroke="#3f3d1d" stroke-width=".6"/>
<path d="M865.1 805.3 858.6 802.4M865.1 761.7L865.1 805.3" fill="none" stroke="#2b2a12" stroke-width=".9"/>
<path d="M755.1 756.6 758.3 760.5 762 764.3 762 807.9 758.3 804.1 755.1 800.2Z" fill="#373515" stroke="#373515" stroke-width=".6"/>
<path d="M762 807.9 758.3 804.1 755.1 800.2" fill="none" stroke="#2b2a12" stroke-width=".9"/>
<path d="M516.8 758.2 517.1 762.9 517.8 767.6 517.8 811.2 517.1 806.5 516.8 801.8Z" fill="#323010" stroke="#323010" stroke-width=".6"/>
<path d="M517.8 811.2 517.1 806.5 516.8 801.8M517.8 767.6L517.8 811.2" fill="none" stroke="#2b2a12" stroke-width=".9"/>
<path d="M674.4 756.7 675.2 760.9 676.9 765.1 679.2 769.3 681.9 773.5 681.9 817.1 679.2 812.9 676.9 808.7 675.2 804.5 674.4 800.3Z" fill="#333111" stroke="#333111" stroke-width=".6"/>
<path d="M681.9 817.1 679.2 812.9 676.9 808.7 675.2 804.5 674.4 800.3" fill="none" stroke="#2b2a12" stroke-width=".9"/>
<path d="M631.9 776 635.7 772.1 639.2 768.1 642.2 764 644.6 759.9 646.2 755.8 646.2 799.4 644.6 803.5 642.2 807.6 639.2 811.7 635.7 815.7 631.9 819.6Z" fill="#363414" stroke="#363414" stroke-width=".6"/>
<path d="M646.2 799.4 644.6 803.5 642.2 807.6 639.2 811.7 635.7 815.7 631.9 819.6" fill="none" stroke="#2b2a12" stroke-width=".9"/>
<path d="M800 776.1 801.6 771.5 802.7 766.9 803.5 762.3 803.8 757.9 803.8 801.5 803.5 805.9 802.7 810.5 801.6 815.1 800 819.7Z" fill="#333111" stroke="#333111" stroke-width=".6"/>
<path d="M803.8 801.5 803.5 805.9 802.7 810.5 801.6 815.1 800 819.7M800 776.1L800 819.7" fill="none" stroke="#2b2a12" stroke-width=".9"/>
<path d="M762 764.3 766.1 768.1 770.7 771.8 770.7 815.4 766.1 811.7 762 807.9Z" fill="#393717" stroke="#393717" stroke-width=".6"/>
<path d="M770.7 815.4 766.1 811.7 762 807.9" fill="none" stroke="#2b2a12" stroke-width=".9"/>
<path d="M595.6 755.5 595.7 759.8 596.4 764.1 597.6 768.6 599.1 773 601.1 777.5 603.5 782.1 603.5 825.7 601.1 821.1 599.1 816.6 597.6 812.2 596.4 807.7 595.7 803.4 595.6 799.1Z" fill="#323010" stroke="#323010" stroke-width=".6"/>
<path d="M603.5 825.7 601.1 821.1 599.1 816.6 597.6 812.2 596.4 807.7 595.7 803.4 595.6 799.1M603.5 782.1L603.5 825.7" fill="none" stroke="#2b2a12" stroke-width=".9"/>
<path d="M517.8 767.6 536.1 771.6 536.1 815.2 517.8 811.2Z" fill="#424020" stroke="#424020" stroke-width=".6"/>
<path d="M536.1 815.2 517.8 811.2M517.8 767.6L517.8 811.2M536.1 771.6L536.1 815.2" fill="none" stroke="#2b2a12" stroke-width=".9"/>
<path d="M536.1 771.6 542.1 768.4 542.1 812 536.1 815.2Z" fill="#3a3818" stroke="#3a3818" stroke-width=".6"/>
<path d="M542.1 812 536.1 815.2M536.1 771.6L536.1 815.2" fill="none" stroke="#2b2a12" stroke-width=".9"/>
<path d="M712.2 785.3 715.3 781 718.1 776.6 720.5 772.3 722.4 768 723.9 763.6 724.8 759.4 724.9 755.1 724.9 798.7 724.8 803 723.9 807.2 722.4 811.6 720.5 815.9 718.1 820.2 715.3 824.6 712.2 828.9Z" fill="#343212" stroke="#343212" stroke-width=".6"/>
<path d="M724.9 798.7 724.8 803 723.9 807.2 722.4 811.6 720.5 815.9 718.1 820.2 715.3 824.6 712.2 828.9M712.2 785.3L712.2 828.9" fill="none" stroke="#2b2a12" stroke-width=".9"/>
<path d="M770.7 771.8 775.7 775.5 781 779 781 822.6 775.7 819.1 770.7 815.4Z" fill="#3b3919" stroke="#3b3919" stroke-width=".6"/>
<path d="M781 822.6 775.7 819.1 770.7 815.4M781 779L781 822.6" fill="none" stroke="#2b2a12" stroke-width=".9"/>
<path d="M781 779 800 776.1 800 819.7 781 822.6Z" fill="#413f1f" stroke="#413f1f" stroke-width=".6"/>
<path d="M800 819.7 781 822.6M781 779L781 822.6M800 776.1L800 819.7" fill="none" stroke="#2b2a12" stroke-width=".9"/>
<path d="M681.9 773.5 685 777.6 688.6 781.8 692.5 785.9 692.5 829.5 688.6 825.4 685 821.2 681.9 817.1Z" fill="#363414" stroke="#363414" stroke-width=".6"/>
<path d="M692.5 829.5 688.6 825.4 685 821.2 681.9 817.1M692.5 785.9L692.5 829.5" fill="none" stroke="#2b2a12" stroke-width=".9"/>
<path d="M622.9 783.8 627.6 780 631.9 776 631.9 819.6 627.6 823.6 622.9 827.4Z" fill="#373515" stroke="#373515" stroke-width=".6"/>
<path d="M631.9 819.6 627.6 823.6 622.9 827.4M622.9 783.8L622.9 827.4" fill="none" stroke="#2b2a12" stroke-width=".9"/>
<path d="M603.5 782.1 622.9 783.8 622.9 827.4 603.5 825.7Z" fill="#424020" stroke="#424020" stroke-width=".6"/>
<path d="M622.9 827.4 603.5 825.7M603.5 782.1L603.5 825.7M622.9 783.8L622.9 827.4" fill="none" stroke="#2b2a12" stroke-width=".9"/>
<path d="M692.5 785.9 712.2 785.3 712.2 828.9 692.5 829.5Z" fill="#424020" stroke="#424020" stroke-width=".6"/>
<path d="M712.2 828.9 692.5 829.5M692.5 785.9L692.5 829.5M712.2 785.3L712.2 828.9" fill="none" stroke="#2b2a12" stroke-width=".9"/>
<path d="M419.8 389.8 420.4 389.5 423.8 387.2 424 386.8 424 380.1 419.8 376.7ZM372.3 414.3 366.9 411.4 362 408.2 357.4 404.7 353.1 400.9 349.1 397 349.1 426.1 350.2 426.3 356.9 428 361.1 428.7 365 428 368.8 426.3 372.1 424 372.3 423.8ZM327.6 451.8 321.7 449.2 315.9 446.3 310.4 443.2 305.1 439.8 299.9 436.3 295 432.5 295 468.1 301.6 467.9 309.2 468 316.7 468.4 323.8 469.2 327.6 469.4ZM264.9 481.1 264.9 518.3 269.1 517.4 276.6 516 277.4 515.9 277.4 487 271.1 484.2ZM316.5 712.5 327.2 722.1 327.2 678.5 316.5 668.9ZM432.4 746.6 432.4 703 426.9 705.8 426.9 749.4ZM385 761.4 385 717.8 371 709.7 371 753.3ZM481.7 738.7 475.7 741.6 475.7 785.2 481.7 782.3 487.2 779.3 492.3 776.2 496.7 772.8 496.7 729.2 492.3 732.6 487.2 735.7ZM566 750.9 562.1 754.6 557.8 758.2 552.9 761.7 547.7 765.1 542.1 768.4 536.1 771.6 536.1 815.2 542.1 812 547.7 808.7 552.9 805.3 557.8 801.8 562.1 798.2 566 794.5ZM976.4 385.9 972.5 389.7 968.2 393.3 963.4 396.4 963.4 404.3 965.3 406 969 408.2 973.1 409.6 976.4 410ZM1043.5 409.9 1039.3 413.9 1034.8 417.8 1030.1 421.4 1025.2 424.9 1020 428.1 1014.6 431 1014.6 447.9 1017.2 448.6 1021.5 448.1 1028.5 446.8 1035.8 446 1043.4 445.5 1043.5 445.5ZM1058.9 468.8 1058.9 490.7 1061.7 490.7 1069.3 491.1 1076.9 491.8 1082.2 492.4 1082.2 456.3 1076.6 459.8 1070.9 463 1065 466ZM1018.1 733.8 1018.1 690.2 1005.7 699 1005.7 742.6ZM896.6 717.1 896.6 760.7 901.6 763.8 907.3 766.6 907.3 723 901.6 720.2ZM941.1 778.2 956.4 771.1 956.4 727.5 941.1 734.6ZM852.4 799.5 858.6 802.4 865.1 805.3 865.1 761.7 858.6 758.8 852.4 755.9 846.6 752.8 841.2 749.6 836.2 746.3 831.7 742.8 827.9 739.2 827.9 782.8 831.7 786.4 836.2 789.9 841.2 793.2 846.6 796.4ZM781 779 775.7 775.5 770.7 771.8 766.1 768.1 762 764.3 762 807.9 766.1 811.7 770.7 815.4 775.7 819.1 781 822.6ZM622.9 783.8 622.9 827.4 627.6 823.6 631.9 819.6 631.9 776 627.6 780Z" fill="url(#stripe1)"/>
<path d="M327.6 469.4 328.2 469.4 331.8 468.3 333.9 466.8 333.9 454 327.6 451.8ZM310.8 497.4 303.8 496 297 494.2 290.4 492.1 283.9 489.7 277.4 487 277.4 515.9 284.1 514.9 291.6 514 299 513.5 306.3 513.5 310.7 513.2 310.8 513.1ZM303.7 542.6 296.4 542.1 289.1 541.2 281.9 539.9 274.6 538.3 267.4 536.5 260.2 534.4 253 532.2 253 575.8 258 577.4 256.6 572.4 263.4 569.7 270.1 567.2 277 564.9 284 562.9 291 561.2 298 559.8 303.7 559.1ZM313.1 587.7 305.8 588.1 298.3 588.1 290.7 587.7 283.1 587 275.3 586.1 267.5 584.9 259.7 583.6 259.7 627.2 267.5 628.5 275.3 629.7 283.1 630.6 283.2 630.6 277.8 622.5 283.4 619 289.1 615.8 295 612.8 301.1 610 307.3 607.4 313.1 605.4ZM338.5 630.7 331.5 632 324.2 632.8 316.6 633.3 308.9 633.6 301 633.6 293 633.5 284.8 633.1 284.8 676.7 293 677.1 301 677.2 308.9 677.2 316.6 676.9 324.2 676.4 324.8 676.3 316.5 668.9 320.7 664.9 325.2 661 329.9 657.4 334.8 653.9 338.5 651.6ZM365.6 717.1 372.5 715.4 377.8 713.7 371 709.7 373.7 705.3 376.7 701 378.9 698.3 378.9 669.7 372.5 671.8 365.6 673.5 358.4 674.9 350.9 676.1 343.2 677.1 335.3 677.9 327.2 678.5 327.2 722.1 335.3 721.5 343.2 720.7 350.9 719.7 358.4 718.5ZM407.3 712.6 400.1 714.5 392.7 716.2 385 717.8 385 761.4 392.7 759.8 400.1 758.1 407.3 756.2 414.2 754.1 420.7 751.9 426.9 749.4 426.9 705.8 420.7 708.3 414.2 710.5ZM462.6 746.8 455.6 749.3 439.1 743.1 439.1 786.7 455.6 792.9 462.6 790.4 469.3 787.9 475.7 785.2 475.7 741.6 469.3 744.3ZM536.1 815.2 536.1 771.6 517.8 767.6 517.8 811.2ZM622.9 827.4 622.9 783.8 603.5 782.1 603.5 825.7ZM712.2 828.9 712.2 785.3 692.5 785.9 692.5 829.5ZM1014.6 431 1008.7 433.6 1008.7 444.6 1010 445.7 1013.4 447.7 1014.6 447.9ZM1039.6 475.3 1039.6 489.9 1042.5 491 1046.9 491.1 1054.2 490.7 1058.9 490.7 1058.9 468.8 1052.7 471.4 1046.3 473.6ZM1083 513.9 1076 515.9 1069 517.6 1062 519 1054.8 519.9 1054.8 536 1056.3 536.2 1063.6 536.7 1070.9 537.6 1078.1 538.9 1085.4 540.5 1092.6 542.3 1099.8 544.4 1103.4 545.5 1103.4 506.4 1096.6 509.1 1089.9 511.6ZM1098.4 603.4 1106 601.6 1106 558 1098.4 559.8 1090.9 561.4 1083.4 562.8 1075.9 563.9 1068.4 564.8 1061 565.3 1053.7 565.3 1053.7 582.3 1056.2 582.8 1063 584.6 1069.6 586.7 1076.1 589.1 1082.6 591.8 1088.9 594.6 1095.1 597.7 1091.8 604.8ZM1090 608.7 1082 609.6 1074 610.3 1066.1 610.7 1058.4 610.9 1050.8 610.8 1043.3 610.4 1036.2 609.6 1036.2 628.6 1038.3 629.6 1044.1 632.5 1049.6 635.6 1054.9 639 1060.1 642.5 1065 646.3 1057.8 654.5 1058.4 654.5 1066.1 654.3 1074 653.9 1082 653.2 1090 652.3ZM1039.9 699.6 1047.9 699.9 1056.1 700 1056.1 656.4 1047.9 656.3 1039.9 656 1032 655.5 1024.4 654.8 1017 653.8 1009.8 652.5 1003.1 650.8 1003.1 674.6 1006.9 677.9 1010.9 681.8 1014.6 685.9 1018.1 690.2 1009.8 696.1 1009.8 696.1 1017 697.4 1024.4 698.4 1032 699.1ZM990 740.2 997.8 741.5 1005.7 742.6 1005.7 699 997.8 697.9 990 696.6 982.5 695.2 975.3 693.6 968.4 691.7 961.9 689.6 955.9 687.2 955.9 726.2 956.4 727.5 955.9 727.7 955.9 730.8 961.9 733.2 968.4 735.3 975.3 737.2 982.5 738.8ZM941.1 778.2 941.1 734.6 933.7 732.6 926.6 730.4 919.8 728.1 913.3 725.6 907.3 723 907.3 766.6 913.3 769.2 919.8 771.7 926.6 774 933.7 776.2ZM882.7 800.1 882.7 756.5 865.1 761.7 865.1 805.3ZM800 819.7 800 776.1 781 779 781 822.6Z" fill="url(#stripe2)"/>
<path d="M1062 519 1069 517.6 1076 515.9 1083 513.9 1089.9 511.6 1096.6 509.1 1103.4 506.4 1100.3 495.2 1092.5 493.9 1084.7 492.7 1076.9 491.8 1069.3 491.1 1061.7 490.7 1054.2 490.7 1046.9 491.1 1042.5 491 1039.2 489.7 1036.5 487.4 1034.6 484.5 1033.8 481.5 1034.1 478.8 1035.8 476.7 1039.6 475.3 1046.3 473.6 1052.7 471.4 1058.9 468.8 1065 466 1070.9 463 1076.6 459.8 1082.2 456.3 1075.2 445.7 1067 445.3 1059 445.2 1051.1 445.2 1043.4 445.5 1035.8 446 1028.5 446.8 1021.5 448.1 1017.2 448.6 1013.4 447.7 1010 445.7 1007.1 443.2 1005.2 440.3 1004.5 437.6 1005.5 435.3 1008.7 433.6 1014.6 431 1020 428.1 1025.2 424.9 1030.1 421.4 1034.8 417.8 1039.3 413.9 1043.5 409.9 1032.8 400.3 1024.7 400.9 1016.8 401.7 1009.1 402.7 1001.6 403.9 994.4 405.3 987.5 407 981.1 409.1 977.1 410.1 973.1 409.6 969 408.2 965.3 406 962.4 403.5 960.8 400.9 960.9 398.5 963.4 396.4 968.2 393.3 972.5 389.7 976.4 385.9 980 382 983.3 377.8 986.3 373.5 989 369.1 975 361 967.3 362.6 959.9 364.3 952.7 366.2 945.8 368.3 939.3 370.5 933.1 373 927.6 375.8 924 377.2 920 377.3 915.5 376.4 911 374.7 907.3 372.5 904.8 370.2 904 367.9 905.7 365.5 909.3 361.8 912.2 357.9 914.7 353.7 916.8 349.4 918.5 345 919.8 340.4 920.9 335.7 904.4 329.5 897.4 332 890.7 334.5 884.3 337.2 878.3 340.1 872.8 343.1 867.7 346.2 863.3 349.6 860.3 351.5 856.3 352 851.6 351.7 846.7 350.5 842.2 348.9 838.9 346.9 837.3 344.7 838.2 342.2 840.4 338.2 841.8 334 842.7 329.6 843.2 325.1 843.2 320.6 842.9 315.9 842.2 311.2 823.9 307.2 817.9 310.4 812.3 313.7 807.1 317.1 802.2 320.6 797.9 324.2 794 327.9 791 331.8 788.7 334 785 335 780.2 335.2 775 334.7 770.1 333.6 766.1 332 763.8 330.1 763.7 327.6 764.4 323.3 764.3 319 763.6 314.7 762.4 310.2 760.9 305.8 758.9 301.3 756.5 296.7 737.1 295 732.4 298.8 728.1 302.8 724.3 306.7 720.8 310.7 717.8 314.8 715.4 318.9 713.8 323 712.3 325.4 709.1 326.8 704.5 327.6 699.2 327.7 694 327.3 689.6 326.2 686.6 324.6 685.6 322.1 684.8 317.9 683.1 313.7 680.8 309.5 678.1 305.3 675 301.2 671.4 297 667.5 292.9 647.8 293.5 644.7 297.8 641.9 302.2 639.5 306.5 637.6 310.8 636.1 315.2 635.2 319.4 635.1 323.7 634.5 326.2 631.9 328 627.7 329.3 622.6 330 617.3 330.2 612.6 329.7 609.1 328.5 607.2 326.2 604.9 322.2 601.7 318.3 598 314.5 593.9 310.7 589.3 307 584.3 303.3 579 299.8 560 302.7 558.4 307.3 557.3 311.9 556.5 316.5 556.2 320.9 556.3 325.3 556.9 329.6 558.4 333.8 558.8 336.3 556.8 338.4 553.2 340.1 548.4 341.5 543.3 342.3 538.5 342.4 534.7 341.6 532.1 339.6 528.3 336 523.8 332.5 518.8 329.2 513.4 326 507.6 322.9 501.4 320 494.9 317.1 477.3 322.3 477.5 327 478 331.6 478.9 336.2 480.2 340.6 481.9 344.9 484.1 349 487 352.9 488.3 355.3 487.1 357.5 484.2 359.7 480 361.6 475.3 363 470.7 363.7 466.7 363.4 463.4 361.7 458.4 358.6 452.7 355.8 446.7 353.2 440.2 350.7 433.4 348.4 426.3 346.2 418.9 344.2 403.6 351.3 405.5 355.9 407.6 360.4 410.1 364.7 413 368.9 416.2 372.9 419.8 376.7 424 380.1 426.2 382.3 425.8 384.7 423.8 387.2 420.4 389.5 416.3 391.5 412 392.7 408 392.8 404.1 391.6 398.1 389.2 391.6 387.1 384.7 385.2 377.5 383.6 370 382.2 362.2 380.9 354.3 379.8 341.9 388.6 345.4 392.9 349.1 397 353.1 400.9 357.4 404.7 362 408.2 366.9 411.4 372.3 414.3 375.2 416.2 375.7 418.6 374.5 421.2 372.1 424 368.8 426.3 365 428 361.1 428.7 356.9 428 350.2 426.3 343 425 335.6 424 328 423.3 320.1 422.8 312.1 422.5 303.9 422.4 295 432.5 299.9 436.3 305.1 439.8 310.4 443.2 315.9 446.3 321.7 449.2 327.6 451.8 333.9 454 337.5 455.5 338.8 457.7 338.7 460.5 337.3 463.4 334.9 466.2 331.8 468.3 328.2 469.4 323.8 469.2 316.7 468.4 309.2 468 301.6 467.9 293.9 468.1 286 468.5 278 469.2 270 470.1 264.9 481.1 271.1 484.2 277.4 487 283.9 489.7 290.4 492.1 297 494.2 303.8 496 310.8 497.4 314.7 498.5 316.8 500.5 317.7 503.2 317.4 506.2 316 509.2 313.8 511.6 310.7 513.2 306.3 513.5 299 513.5 291.6 514 284.1 514.9 276.6 516 269.1 517.4 261.6 519 254 520.8 253 532.2 260.2 534.4 267.4 536.5 274.6 538.3 281.9 539.9 289.1 541.2 296.4 542.1 303.7 542.6 308 543.2 310.8 544.9 312.6 547.5 313.4 550.5 313.1 553.5 311.8 556.2 309.3 558.1 305.2 558.9 298 559.8 291 561.2 284 562.9 277 564.9 270.1 567.2 263.4 569.7 256.6 572.4 259.7 583.6 267.5 584.9 275.3 586.1 283.1 587 290.7 587.7 298.3 588.1 305.8 588.1 313.1 587.7 317.5 587.8 320.8 589.1 323.5 591.4 325.4 594.3 326.2 597.3 325.9 600 324.2 602.1 320.4 603.5 313.7 605.2 307.3 607.4 301.1 610 295 612.8 289.1 615.8 283.4 619 277.8 622.5 284.8 633.1 293 633.5 301 633.6 308.9 633.6 316.6 633.3 324.2 632.8 331.5 632 338.5 630.7 342.8 630.2 346.6 631.1 350 633.1 352.9 635.6 354.8 638.5 355.5 641.2 354.5 643.5 351.3 645.2 345.4 647.8 340 650.7 334.8 653.9 329.9 657.4 325.2 661 320.7 664.9 316.5 668.9 327.2 678.5 335.3 677.9 343.2 677.1 350.9 676.1 358.4 674.9 365.6 673.5 372.5 671.8 378.9 669.7 382.9 668.7 386.9 669.2 391 670.6 394.7 672.8 397.6 675.3 399.2 677.9 399.1 680.3 396.6 682.4 391.8 685.5 387.5 689.1 383.6 692.9 380 696.8 376.7 701 373.7 705.3 371 709.7 385 717.8 392.7 716.2 400.1 714.5 407.3 712.6 414.2 710.5 420.7 708.3 426.9 705.8 432.4 703 436 701.6 440 701.5 444.5 702.4 449 704.1 452.7 706.3 455.2 708.6 456 710.9 454.3 713.3 450.7 717 447.8 720.9 445.3 725.1 443.2 729.4 441.5 733.8 440.2 738.4 439.1 743.1 455.6 749.3 462.6 746.8 469.3 744.3 475.7 741.6 481.7 738.7 487.2 735.7 492.3 732.6 496.7 729.2 499.7 727.3 503.7 726.8 508.4 727.1 513.3 728.3 517.8 729.9 521.1 731.9 522.7 734.1 521.8 736.6 519.6 740.6 518.2 744.8 517.3 749.2 516.8 753.7 516.8 758.2 517.1 762.9 517.8 767.6 536.1 771.6 542.1 768.4 547.7 765.1 552.9 761.7 557.8 758.2 562.1 754.6 566 750.9 569 747 571.3 744.8 575 743.8 579.8 743.6 585 744.1 589.9 745.2 593.9 746.8 596.2 748.7 596.3 751.2 595.6 755.5 595.7 759.8 596.4 764.1 597.6 768.6 599.1 773 601.1 777.5 603.5 782.1 622.9 783.8 627.6 780 631.9 776 635.7 772.1 639.2 768.1 642.2 764 644.6 759.9 646.2 755.8 647.7 753.4 650.9 752 655.5 751.2 660.8 751.1 666 751.5 670.4 752.6 673.4 754.2 674.4 756.7 675.2 760.9 676.9 765.1 679.2 769.3 681.9 773.5 685 777.6 688.6 781.8 692.5 785.9 712.2 785.3 715.3 781 718.1 776.6 720.5 772.3 722.4 768 723.9 763.6 724.8 759.4 724.9 755.1 725.5 752.6 728.1 750.8 732.3 749.5 737.4 748.8 742.7 748.6 747.4 749.1 750.9 750.3 752.8 752.6 755.1 756.6 758.3 760.5 762 764.3 766.1 768.1 770.7 771.8 775.7 775.5 781 779 800 776.1 801.6 771.5 802.7 766.9 803.5 762.3 803.8 757.9 803.7 753.5 803.1 749.2 801.6 745 801.2 742.5 803.2 740.4 806.8 738.7 811.6 737.3 816.7 736.5 821.5 736.4 825.3 737.2 827.9 739.2 831.7 742.8 836.2 746.3 841.2 749.6 846.6 752.8 852.4 755.9 858.6 758.8 865.1 761.7 882.7 756.5 882.5 751.8 882 747.2 881.1 742.6 879.8 738.2 878.1 733.9 875.9 729.8 873 725.9 871.7 723.5 872.9 721.3 875.8 719.1 880 717.2 884.7 715.8 889.3 715.1 893.3 715.4 896.6 717.1 901.6 720.2 907.3 723 913.3 725.6 919.8 728.1 926.6 730.4 933.7 732.6 941.1 734.6 956.4 727.5 954.5 722.9 952.4 718.4 949.9 714.1 947 709.9 943.8 705.9 940.2 702.1 936 698.7 933.8 696.5 934.2 694.1 936.2 691.6 939.6 689.3 943.7 687.3 948 686.1 952 686 955.9 687.2 961.9 689.6 968.4 691.7 975.3 693.6 982.5 695.2 990 696.6 997.8 697.9 1005.7 699 1018.1 690.2 1014.6 685.9 1010.9 681.8 1006.9 677.9 1002.6 674.1 998 670.6 993.1 667.4 987.7 664.5 984.8 662.6 984.3 660.2 985.5 657.6 987.9 654.8 991.2 652.5 995 650.8 998.9 650.1 1003.1 650.8 1009.8 652.5 1017 653.8 1024.4 654.8 1032 655.5 1039.9 656 1047.9 656.3 1056.1 656.4 1065 646.3 1060.1 642.5 1054.9 639 1049.6 635.6 1044.1 632.5 1038.3 629.6 1032.4 627 1026.1 624.8 1022.5 623.3 1021.2 621.1 1021.3 618.3 1022.7 615.4 1025.1 612.6 1028.2 610.5 1031.8 609.4 1036.2 609.6 1043.3 610.4 1050.8 610.8 1058.4 610.9 1066.1 610.7 1074 610.3 1082 609.6 1090 608.7 1095.1 597.7 1088.9 594.6 1082.6 591.8 1076.1 589.1 1069.6 586.7 1063 584.6 1056.2 582.8 1049.2 581.4 1045.3 580.3 1043.2 578.3 1042.3 575.6 1042.6 572.6 1044 569.6 1046.2 567.2 1049.3 565.6 1053.7 565.3 1061 565.3 1068.4 564.8 1075.9 563.9 1083.4 562.8 1090.9 561.4 1098.4 559.8 1106 558 1107 546.6 1099.8 544.4 1092.6 542.3 1085.4 540.5 1078.1 538.9 1070.9 537.6 1063.6 536.7 1056.3 536.2 1052 535.6 1049.2 533.9 1047.4 531.3 1046.6 528.3 1046.9 525.3 1048.2 522.6 1050.7 520.7 1054.8 519.9ZM597.8 458.1 593.2 451.3 588.1 442.8 583 433.1 575.1 416.8 578.4 414.7 583.1 412.7 588.4 411.4 595.8 410.2 615.6 407.3 626.1 406.2 647.2 404.4 668.5 403.6 690.8 403.6 711.2 404.4 721.8 405.1 743.7 407.3 764.4 410.2 774.7 412 779.9 413.4 784.4 415.4 785 415.8 735.5 465 719.9 476.4 712.5 480.7 706.9 483.5 700.8 485.7 691.7 487.9 683.1 489.2 676.6 489.6 666.2 489.3 654.7 488.3 646 487 637.4 485.2 630.2 483 622.5 479.7 616.6 476.5 612.4 473.5 607.7 469.3 602.2 463.3ZM789.6 526.8 785.6 523.7 780.9 518.4 776.7 512.1 775.3 509.2 775.4 508.9 777.7 505.3 781.7 500.9 787.9 495.1 793.6 490.4 801.4 484.7 811.7 477.8 823.7 470.5 855.1 451.9 859.6 449.8 864.7 448.3 870.3 447.5 876.1 447.4 881.7 448.1 886.9 449.4 891.6 451.4 897.1 454.5 911.3 463 918.3 467.6 931.5 477.3 943.4 487.6 954.6 498.7 963.6 509.3 967.8 514.9 975.5 527 979.4 534.7 978.5 535.5 974.4 537.8 969.5 539.6 964.1 540.6 958.4 541 852 540.9 827.1 538.7 817 537.2 810 535.8 803.7 533.9 795.8 530.4ZM494.3 551.2 484.2 550.7 471.8 549.7 456.4 547.9 439.3 545.6 395.8 539.2 390.4 538 385.6 536.2 381.6 533.8 381.2 533.5 384.3 527.4 387.8 521.5 395.8 510.1 405.1 499 416.2 487.9 427.6 478.1 434 473.1 448.2 463.3 463 454.4 470.8 450.1 475.5 448.2 480.8 447 486.5 446.4 492.2 446.6 497.7 447.5 502.8 449.1 507.1 451.2 510.5 453.9 563.5 507.2 572.7 520.7 573.8 523 573.5 523.6 570.9 527.1 565.3 532.2 558 537.4 551.7 541.1 544.7 544.5 537.7 547 528.9 549.2 521.2 550.5 514.6 551.2 506 551.4ZM636.3 578.9 633.8 576.6 631.6 574.2 630.1 572.1 631.6 570 633.8 567.6 636.3 565.3 639.1 563.2 642.2 561.2 645.7 559.4 649.4 557.7 653.3 556.3 657.4 555.1 661.7 554 666.2 553.2 670.7 552.6 675.3 552.3 680 552.2 684.7 552.3 689.3 552.6 693.8 553.2 698.3 554 702.6 555.1 706.7 556.3 710.6 557.7 714.3 559.4 717.8 561.2 720.9 563.2 723.7 565.3 726.2 567.6 728.4 570 729.9 572.1 728.4 574.2 726.2 576.6 723.7 578.9 720.9 581 717.8 583 714.3 584.8 710.6 586.5 706.7 587.9 702.6 589.1 698.3 590.2 693.8 591 689.3 591.6 684.7 591.9 680 592 675.3 591.9 670.7 591.6 666.2 591 661.7 590.2 657.4 589.1 653.3 587.9 649.4 586.5 645.7 584.8 642.2 583 639.1 581ZM852.9 693 849.5 690.3 796.5 637 787.3 623.5 786.2 621.2 786.5 620.6 789.1 617.1 794.7 612 802 606.8 808.3 603.1 815.3 599.7 822.3 597.2 831.1 595 838.8 593.7 845.4 593 854 592.8 865.7 593 875.8 593.5 888.2 594.5 903.6 596.3 920.7 598.6 964.2 605 969.6 606.2 974.4 608 978.4 610.4 978.8 610.7 975.7 616.8 972.2 622.7 964.2 634.1 954.9 645.2 943.8 656.3 935.9 663.1 935.7 663.3 928 668.3 920.1 673.3 911.8 678 903.3 682.6 894.5 687 885.5 691.2 876.2 695.3 870.3 697.7 867.8 697.6 862.3 696.7 857.2 695.1ZM572.1 649.1 566.4 653.8 558.6 659.5 548.3 666.4 536.3 673.7 504.9 692.3 500.4 694.4 495.3 695.9 489.7 696.7 487.4 696.8 483.8 695.3 474.5 691.2 465.5 687 456.7 682.6 448.2 678 439.9 673.3 432 668.3 424.3 663.3 416.6 656.6 405.4 645.5 396.4 634.9 392.2 629.3 384.5 617.2 380.6 609.5 381.5 608.7 385.6 606.4 390.5 604.6 395.9 603.6 401.6 603.2 508 603.3 532.9 605.5 543 607 550 608.4 556.3 610.3 564.2 613.8 570.4 617.4 574.4 620.5 579.1 625.8 583.3 632.1 584.7 635 584.6 635.3 582.3 638.9 578.3 643.3ZM766.8 692.9 771.9 701.4 777 711.1 782.6 722.8 772 724.6 760.7 726.4 749.4 727.9 738 729.2 726.4 730.2 714.9 731 703.3 731.6 691.6 732 680 732.1 668.4 732 656.7 731.6 645.1 731 633.6 730.2 622 729.2 610.6 727.9 599.3 726.4 588 724.6 580.2 723.2 624.5 679.2 640.1 667.8 647.5 663.5 653.1 660.7 659.2 658.5 668.3 656.3 676.9 655 683.4 654.6 693.8 654.9 705.3 655.9 714 657.2 722.6 659 729.8 661.2 737.5 664.5 743.4 667.7 747.6 670.7 752.3 674.9 757.8 680.9 762.2 686.1Z" fill="url(#gtop)" fill-rule="evenodd" stroke="#2b2a12" stroke-width="1.25"/>
<path d="M1013.5 532.7 1012.9 526 1011.9 519.3 1010.5 512.6 1008.7 505.9 1006.5 499.3 1003.8 492.8 1000.8 486.3 997.4 479.9 993.6 473.5 989.4 467.2 984.9 461 980 454.9 974.7 448.9 969 443.1 963 437.3 956.7 431.6 950 426.1 943 420.8 935.7 415.5 928 410.5 920.1 405.5 911.8 400.8 903.3 396.2 894.5 391.8 885.5 387.6 876.2 383.5 866.6 379.7 856.9 376 846.9 372.5 836.7 369.3 826.3 366.2 815.7 363.4 805 360.7 794.1 358.3 783.1 356.1 772 354.2 760.7 352.4 749.4 350.9 738 349.6 726.4 348.6 714.9 347.8 703.3 347.2 691.6 346.8 680 346.7 668.4 346.8 656.7 347.2 645.1 347.8 633.6 348.6 622 349.6 610.6 350.9 599.3 352.4 588 354.2 576.9 356.1 565.9 358.3 555 360.7 544.3 363.4 533.7 366.2 523.3 369.3 513.1 372.5 503.1 376 493.4 379.7 483.8 383.5 474.5 387.6 465.5 391.8 456.7 396.2 448.2 400.8 439.9 405.5 432 410.5 424.3 415.5 417 420.8 410 426.1 403.3 431.6 397 437.3 391 443.1 385.3 448.9 380 454.9 375.1 461 370.6 467.2 366.4 473.5 362.6 479.9 359.2 486.3 356.2 492.8 353.5 499.3 351.3 505.9 349.5 512.6 348.1 519.3 347.1 526 346.5 532.7 346.2 539.4 346.5 546.1 346.8 550.3 347.1 547.8 348.1 541.1 349.5 534.4 351.3 527.7 353.5 521.1 356.2 514.6 359.2 508.1 362.6 501.7 366.4 495.3 370.6 489 375.1 482.8 380 476.7 385.3 470.7 391 464.9 397 459.1 403.3 453.4 410 447.9 417 442.6 424.3 437.3 432 432.3 439.9 427.3 448.2 422.6 456.7 418 465.5 413.6 474.5 409.4 483.8 405.3 493.4 401.5 503.1 397.8 513.1 394.3 523.3 391.1 533.7 388 544.3 385.2 555 382.5 565.9 380.1 576.9 377.9 588 376 599.3 374.2 610.6 372.7 622 371.4 633.6 370.4 645.1 369.6 656.7 369 668.4 368.6 680 368.5 691.6 368.6 703.3 369 714.9 369.6 726.4 370.4 738 371.4 749.4 372.7 760.7 374.2 772 376 783.1 377.9 794.1 380.1 805 382.5 815.7 385.2 826.3 388 836.7 391.1 846.9 394.3 856.9 397.8 866.6 401.5 876.2 405.3 885.5 409.4 894.5 413.6 903.3 418 911.8 422.6 920.1 427.3 928 432.3 935.7 437.3 943 442.6 950 447.9 956.7 453.4 963 459.1 969 464.9 974.7 470.7 980 476.7 984.9 482.8 989.4 489 993.6 495.3 997.4 501.7 1000.8 508.1 1003.8 514.6 1006.5 521.1 1008.7 527.7 1010.5 534.4 1011.9 541.1 1012.9 547.8 1013.2 550.3 1013.5 546.1 1013.8 539.4Z" fill="url(#gpw)" stroke="#2b2a12" stroke-width="1.15"/>
<path d="M348.1 559.5 349.5 566.2 351.3 572.9 353.5 579.5 356.2 586 359.2 592.5 362.6 598.9 366.4 605.3 370.6 611.6 375.1 617.8 380 623.9 385.3 629.9 391 635.7 397 641.5 403.3 647.2 410 652.7 417 658 424.3 663.3 424.3 663.3 416.6 656.6 405.4 645.5 396.4 634.9 392.2 629.3 384.5 617.2 378.6 605.4 376.1 599.4 375.6 596.1 376.4 592.8 378.4 589.7 381.5 586.9 385.6 584.6 390.5 582.8 395.9 581.8 401.6 581.4 508 581.5 532.9 583.7 543 585.2 550 586.6 556.3 588.5 564.2 592 570.4 595.6 574.4 598.7 579.1 604 583.3 610.3 585.7 615.3 587.3 620.5 587.5 625.2 586.4 630.7 584.6 635.3 582.3 638.9 578.3 643.3 572.1 649.1 566.4 653.8 558.6 659.5 548.3 666.4 536.3 673.7 504.9 692.3 500.4 694.4 495.3 695.9 489.7 696.7 487.4 696.8 493.4 699.1 503.1 702.8 513.1 706.3 523.3 709.5 533.7 712.6 544.3 715.4 555 718.1 565.9 720.5 568.3 720.9 567.9 720.1 567.7 716.8 568.8 713.5 571.1 710.5 624.5 657.4 640.1 646 647.5 641.7 653.1 638.9 659.2 636.7 668.3 634.5 676.9 633.2 683.4 632.8 693.8 633.1 705.3 634.1 714 635.4 722.6 637.2 729.8 639.4 737.5 642.7 743.4 645.9 747.6 648.9 752.3 653.1 757.8 659.1 762.2 664.3 766.8 671.1 771.9 679.6 777 689.3 789.1 714.3 790.1 717.6 789.7 720.9 789.5 721.4 794.1 720.5 805 718.1 815.7 715.4 826.3 712.6 836.7 709.5 846.9 706.3 856.9 702.8 866.6 699.1 870.3 697.7 867.8 697.6 862.3 696.7 857.2 695.1 852.9 693 849.5 690.3 796.5 637 787.3 623.5 784.5 617.7 783.1 613.5 782.9 609.4 784.1 603.7 786.5 598.8 789.1 595.3 794.7 590.2 802 585 808.3 581.3 815.3 577.9 822.3 575.4 831.1 573.2 838.8 571.9 845.4 571.2 854 571 865.7 571.2 875.8 571.7 888.2 572.7 903.6 574.5 920.7 576.8 964.2 583.2 969.6 584.4 974.4 586.2 978.4 588.6 981.4 591.4 983.3 594.6 983.8 597.9 983.2 601.2 981.4 605.5 975.7 616.8 972.2 622.7 964.2 634.1 954.9 645.2 943.8 656.3 935.9 663.1 943 658 950 652.7 956.7 647.2 963 641.5 969 635.7 974.7 629.9 980 623.9 984.9 617.8 989.4 611.6 993.6 605.3 997.4 598.9 1000.8 592.5 1003.8 586 1006.5 579.5 1008.7 572.9 1010.5 566.2 1011.9 559.5 1012.9 552.8 1013.2 550.3 1012.9 547.8 1011.9 541.1 1010.5 534.4 1008.7 527.7 1006.5 521.1 1003.8 514.6 1000.8 508.1 997.4 501.7 993.6 495.3 989.4 489 984.9 482.8 980 476.7 974.7 470.7 969 464.9 963 459.1 956.7 453.4 950 447.9 943 442.6 935.7 437.3 928 432.3 920.1 427.3 911.8 422.6 903.3 418 894.5 413.6 885.5 409.4 876.2 405.3 866.6 401.5 856.9 397.8 846.9 394.3 836.7 391.1 826.3 388 815.7 385.2 805 382.5 794.1 380.1 783.1 377.9 772 376 760.7 374.2 749.4 372.7 738 371.4 726.4 370.4 714.9 369.6 703.3 369 691.6 368.6 680 368.5 668.4 368.6 656.7 369 645.1 369.6 633.6 370.4 622 371.4 610.6 372.7 599.3 374.2 588 376 576.9 377.9 565.9 380.1 555 382.5 544.3 385.2 533.7 388 523.3 391.1 513.1 394.3 503.1 397.8 493.4 401.5 483.8 405.3 474.5 409.4 465.5 413.6 456.7 418 448.2 422.6 439.9 427.3 432 432.3 424.3 437.3 417 442.6 410 447.9 403.3 453.4 397 459.1 391 464.9 385.3 470.7 380 476.7 375.1 482.8 370.6 489 366.4 495.3 362.6 501.7 359.2 508.1 356.2 514.6 353.5 521.1 351.3 527.7 349.5 534.4 348.1 541.1 347.1 547.8 346.8 550.3 347.1 552.8ZM588.1 442.8 583 433.1 570.9 408.1 569.9 404.8 570.3 401.5 571.9 398.3 574.6 395.4 578.4 392.9 583.1 390.9 588.4 389.6 595.8 388.4 615.6 385.5 626.1 384.4 647.2 382.6 668.5 381.8 690.8 381.8 711.2 382.6 721.8 383.3 743.7 385.5 764.4 388.4 774.7 390.2 779.9 391.6 784.4 393.6 788.1 396.1 790.7 399.1 792.1 402.3 792.3 405.6 791.2 408.9 788.9 411.9 735.5 465 719.9 476.4 712.5 480.7 706.9 483.5 700.8 485.7 691.7 487.9 683.1 489.2 676.6 489.6 666.2 489.3 654.7 488.3 646 487 637.4 485.2 630.2 483 622.5 479.7 616.6 476.5 612.4 473.5 607.7 469.3 602.2 463.3 597.8 458.1 593.2 451.3ZM801.4 462.9 811.7 456 823.7 448.7 855.1 430.1 859.6 428 864.7 426.5 870.3 425.7 876.1 425.6 881.7 426.3 886.9 427.6 891.6 429.6 897.1 432.7 911.3 441.2 918.3 445.8 931.5 455.5 943.4 465.8 954.6 476.9 963.6 487.5 967.8 493.1 975.5 505.2 981.4 517 983.9 523 984.4 526.3 983.6 529.6 981.6 532.7 978.5 535.5 974.4 537.8 969.5 539.6 964.1 540.6 958.4 541 852 540.9 827.1 538.7 817 537.2 810 535.8 803.7 533.9 795.8 530.4 789.6 526.8 785.6 523.7 780.9 518.4 776.7 512.1 774.3 507.1 772.7 501.9 772.5 497.2 773.6 491.7 775.4 487.1 777.7 483.5 781.7 479.1 787.9 473.3 793.6 468.6ZM471.8 549.7 456.4 547.9 439.3 545.6 395.8 539.2 390.4 538 385.6 536.2 381.6 533.8 378.6 531 376.7 527.8 376.2 524.5 376.8 521.2 378.6 516.9 384.3 505.6 387.8 499.7 395.8 488.3 405.1 477.2 416.2 466.1 427.6 456.3 434 451.3 448.2 441.5 463 432.6 470.8 428.3 475.5 426.4 480.8 425.2 486.5 424.6 492.2 424.8 497.7 425.7 502.8 427.3 507.1 429.4 510.5 432.1 563.5 485.4 572.7 498.9 575.5 504.7 576.9 508.9 577.1 513 575.9 518.7 573.5 523.6 570.9 527.1 565.3 532.2 558 537.4 551.7 541.1 544.7 544.5 537.7 547 528.9 549.2 521.2 550.5 514.6 551.2 506 551.4 494.3 551.2 484.2 550.7ZM732.6 555.8 733.2 558.5 733.4 561.2 733.2 563.9 732.6 566.6 731.6 569.2 730.2 571.7 728.4 574.2 726.2 576.6 723.7 578.9 720.9 581 717.8 583 714.3 584.8 710.6 586.5 706.7 587.9 702.6 589.1 698.3 590.2 693.8 591 689.3 591.6 684.7 591.9 680 592 675.3 591.9 670.7 591.6 666.2 591 661.7 590.2 657.4 589.1 653.3 587.9 649.4 586.5 645.7 584.8 642.2 583 639.1 581 636.3 578.9 633.8 576.6 631.6 574.2 629.8 571.7 628.4 569.2 627.4 566.6 626.8 563.9 626.6 561.2 626.8 558.5 627.4 555.8 628.4 553.2 629.8 550.7 631.6 548.2 633.8 545.8 636.3 543.5 639.1 541.4 642.2 539.4 645.7 537.6 649.4 535.9 653.3 534.5 657.4 533.3 661.7 532.2 666.2 531.4 670.7 530.8 675.3 530.5 680 530.4 684.7 530.5 689.3 530.8 693.8 531.4 698.3 532.2 702.6 533.3 706.7 534.5 710.6 535.9 714.3 537.6 717.8 539.4 720.9 541.4 723.7 543.5 726.2 545.8 728.4 548.2 730.2 550.7 731.6 553.2Z" fill="url(#gfl)" fill-rule="evenodd" stroke="#2b2a12" stroke-width="1.15"/>
<path d="M791.2 408.9 792.3 405.6 792.1 402.3 790.7 399.1 788.1 396.1 784.4 393.6 779.9 391.6 774.7 390.2 764.4 388.4 743.7 385.5 721.8 383.3 711.2 382.6 690.8 381.8 668.5 381.8 647.2 382.6 626.1 384.4 615.6 385.5 595.8 388.4 588.4 389.6 583.1 390.9 578.4 392.9 574.6 395.4 571.9 398.3 570.3 401.5 569.9 404.8 570.9 408.1 575.1 416.8 578.4 414.7 583.1 412.7 588.4 411.4 595.8 410.2 615.6 407.3 626.1 406.2 647.2 404.4 668.5 403.6 690.8 403.6 711.2 404.4 721.8 405.1 743.7 407.3 764.4 410.2 774.7 412 779.9 413.4 784.4 415.4 785 415.8 788.9 411.9Z" fill="url(#gw0)" stroke="#2b2a12" stroke-width="1.15"/>
<path d="M774.2 390.1L774.2 411.9M588.5 389.6L588.5 411.4" fill="none" stroke="#2b2a12" stroke-width=".9"/>
<path d="M577.1 513 576.9 508.9 575.5 504.7 572.7 498.9 563.5 485.4 510.5 432.1 507.1 429.4 502.8 427.3 497.7 425.7 492.2 424.8 486.5 424.6 480.8 425.2 475.5 426.4 470.8 428.3 463 432.6 448.2 441.5 434 451.3 427.6 456.3 416.2 466.1 405.1 477.2 395.8 488.3 387.8 499.7 384.3 505.6 378.6 516.9 376.8 521.2 376.2 524.5 376.7 527.8 378.6 531 381.2 533.5 384.3 527.4 387.8 521.5 395.8 510.1 405.1 499 416.2 487.9 427.6 478.1 434 473.1 448.2 463.3 463 454.4 470.8 450.1 475.5 448.2 480.8 447 486.5 446.4 492.2 446.6 497.7 447.5 502.8 449.1 507.1 451.2 510.5 453.9 563.5 507.2 572.7 520.7 573.8 523 575.9 518.7Z" fill="url(#gw1)" stroke="#2b2a12" stroke-width="1.15"/>
<path d="M470.4 428.5L470.4 450.3M510.4 432.1L510.4 453.9M569 492.9L569 512.7M376.9 521.2L376.9 528.6" fill="none" stroke="#2b2a12" stroke-width=".9"/>
<path d="M587.5 625.2 587.3 620.5 585.7 615.3 583.3 610.3 579.1 604 574.4 598.7 570.4 595.6 564.2 592 556.3 588.5 550 586.6 543 585.2 532.9 583.7 508 581.5 401.6 581.4 395.9 581.8 390.5 582.8 385.6 584.6 381.5 586.9 378.4 589.7 376.4 592.8 375.6 596.1 376.1 599.4 378.6 605.4 380.6 609.5 381.5 608.7 385.6 606.4 390.5 604.6 395.9 603.6 401.6 603.2 508 603.3 532.9 605.5 543 607 550 608.4 556.3 610.3 564.2 613.8 570.4 617.4 574.4 620.5 579.1 625.8 583.3 632.1 584.7 635 586.4 630.7Z" fill="url(#gw2)" stroke="#2b2a12" stroke-width="1.15"/>
<path d="M401.6 581.5L401.6 603.3M519 582.2L519 603.3" fill="none" stroke="#2b2a12" stroke-width=".9"/>
<path d="M766.8 671.1 762.2 664.3 757.8 659.1 752.3 653.1 747.6 648.9 743.4 645.9 737.5 642.7 729.8 639.4 722.6 637.2 714 635.4 705.3 634.1 693.8 633.1 683.4 632.8 676.9 633.2 668.3 634.5 659.2 636.7 653.1 638.9 647.5 641.7 640.1 646 624.5 657.4 571.1 710.5 568.8 713.5 567.7 716.8 567.9 720.1 568.3 720.9 576.9 722.7 580.2 723.2 624.5 679.2 640.1 667.8 647.5 663.5 653.1 660.7 659.2 658.5 668.3 656.3 676.9 655 683.4 654.6 693.8 654.9 705.3 655.9 714 657.2 722.6 659 729.8 661.2 737.5 664.5 743.4 667.7 747.6 670.7 752.3 674.9 757.8 680.9 762.2 686.1 766.8 692.9 771.9 701.4 777 711.1 782.6 722.8 783.1 722.7 789.5 721.4 789.7 720.9 790.1 717.6 789.1 714.3 777 689.3 771.9 679.6Z" fill="url(#gw3)" stroke="#2b2a12" stroke-width="1.15"/>
<path d="M571.2 710.5L571.2 721.8M630 653L630 673.6M762 664L762 685.8M788.5 714.2L788.5 721.9" fill="none" stroke="#2b2a12" stroke-width=".9"/>
<path d="M888.2 572.7 875.8 571.7 865.7 571.2 854 571 845.4 571.2 838.8 571.9 831.1 573.2 822.3 575.4 815.3 577.9 808.3 581.3 802 585 794.7 590.2 789.1 595.3 786.5 598.8 784.1 603.7 782.9 609.4 783.1 613.5 784.5 617.7 786.2 621.2 786.5 620.6 789.1 617.1 794.7 612 802 606.8 808.3 603.1 815.3 599.7 822.3 597.2 831.1 595 838.8 593.7 845.4 593 854 592.8 865.7 593 875.8 593.5 888.2 594.5 903.6 596.3 920.7 598.6 964.2 605 969.6 606.2 974.4 608 978.4 610.4 978.8 610.7 981.4 605.5 983.2 601.2 983.8 597.9 983.3 594.6 981.4 591.4 978.4 588.6 974.4 586.2 969.6 584.4 964.2 583.2 920.7 576.8 903.6 574.5Z" fill="url(#gw4)" stroke="#2b2a12" stroke-width="1.15"/>
<path d="M875.2 571.6L875.2 593.4M963.7 583.4L963.7 605.2" fill="none" stroke="#2b2a12" stroke-width=".9"/>
<path d="M801.4 462.9 793.6 468.6 787.9 473.3 781.7 479.1 777.7 483.5 775.4 487.1 773.6 491.7 772.5 497.2 772.7 501.9 774.3 507.1 775.3 509.2 775.4 508.9 777.7 505.3 781.7 500.9 787.9 495.1 793.6 490.4 801.4 484.7 811.7 477.8 823.7 470.5 855.1 451.9 859.6 449.8 864.7 448.3 870.3 447.5 876.1 447.4 881.7 448.1 886.9 449.4 891.6 451.4 897.1 454.5 911.3 463 918.3 467.6 931.5 477.3 943.4 487.6 954.6 498.7 963.6 509.3 967.8 514.9 975.5 527 979.4 534.7 981.6 532.7 983.6 529.6 984.4 526.3 983.9 523 981.4 517 975.5 505.2 967.8 493.1 963.6 487.5 954.6 476.9 943.4 465.8 931.5 455.5 918.3 445.8 911.3 441.2 897.1 432.7 891.6 429.6 886.9 427.6 881.7 426.3 876.1 425.6 870.3 425.7 864.7 426.5 859.6 428 855.1 430.1 823.7 448.7 811.7 456Z" fill="url(#gw5)" stroke="#2b2a12" stroke-width="1.15"/>
<path d="M983.8 522.7L983.8 529.9M793.2 468.8L793.2 490.6M855.2 430.5L855.2 452.2M891.6 429.7L891.6 451.5" fill="none" stroke="#2b2a12" stroke-width=".9"/>
<path d="M733.2 558.5 732.6 555.8 731.6 553.2 730.2 550.7 728.4 548.2 726.2 545.8 723.7 543.5 720.9 541.4 717.8 539.4 714.3 537.6 710.6 535.9 706.7 534.5 702.6 533.3 698.3 532.2 693.8 531.4 689.3 530.8 684.7 530.5 680 530.4 675.3 530.5 670.7 530.8 666.2 531.4 661.7 532.2 657.4 533.3 653.3 534.5 649.4 535.9 645.7 537.6 642.2 539.4 639.1 541.4 636.3 543.5 633.8 545.8 631.6 548.2 629.8 550.7 628.4 553.2 627.4 555.8 626.8 558.5 626.6 561.2 626.8 563.9 627.4 566.6 628.4 569.2 629.8 571.7 630.1 572.1 631.6 570 633.8 567.6 636.3 565.3 639.1 563.2 642.2 561.2 645.7 559.4 649.4 557.7 653.3 556.3 657.4 555.1 661.7 554 666.2 553.2 670.7 552.6 675.3 552.3 680 552.2 684.7 552.3 689.3 552.6 693.8 553.2 698.3 554 702.6 555.1 706.7 556.3 710.6 557.7 714.3 559.4 717.8 561.2 720.9 563.2 723.7 565.3 726.2 567.6 728.4 570 729.9 572.1 730.2 571.7 731.6 569.2 732.6 566.6 733.2 563.9 733.4 561.2Z" fill="url(#ghw)" stroke="#2b2a12" stroke-width="1"/>
</g>
<path d="M277.8 666.1 284.8 676.7 293 677.1 301 677.2 308.9 677.2 314.8 677 277.8 655.6ZM316.5 712.5 327.2 722.1 335.3 721.5 343.2 720.7 350.9 719.7 358.4 718.5 365.6 717.1 371 715.7 371 753.3 385 761.4 392.7 759.8 400.1 758.1 407.3 756.2 414.2 754.1 420.7 751.9 426.9 749.4 432.4 746.6 434.2 745.9 385.3 717.7 385 717.8 377.8 713.7 377.8 713.7 371 709.7 371.2 709.5 316.5 677.9ZM439.1 786.7 455.6 792.9 462.6 790.4 469.3 787.9 475.7 785.2 481.7 782.3 487.2 779.3 489.6 777.9 439.1 748.8ZM516.8 801.8 517.1 806.5 517.8 811.2 536.1 815.2 542.1 812 545.3 810.1 516.8 793.6ZM800 819.7 800.5 818.2 797.3 820.1ZM846.6 796.4 852.4 799.5 858.6 802.4 865.1 805.3 882.7 800.1 882.7 770.8 842.5 794ZM901.6 763.8 907.3 766.6 913.3 769.2 919.8 771.7 926.6 774 933.7 776.2 941.1 778.2 956.4 771.1 956.4 731 961.9 733.2 968.4 735.3 975.3 737.2 982.5 738.8 990 740.2 997.8 741.5 1005.7 742.6 1018.1 733.8 1018.1 697.5 1024.4 698.4 1032 699.1 1039.9 699.6 1047.9 699.9 1056.1 700 1065 689.9 1065 665.6 898.4 761.8ZM1090 652.3 1090.7 650.7 1087.5 652.6Z" fill="#181814" fill-opacity=".74"/>
<path d="M277.8 666.1 284.8 676.7 293 677.1 301 677.2 308.9 677.2 314.8 677 277.8 655.6ZM316.5 712.5 327.2 722.1 335.3 721.5 343.2 720.7 350.9 719.7 358.4 718.5 365.6 717.1 371 715.7 371 753.3 385 761.4 392.7 759.8 400.1 758.1 407.3 756.2 414.2 754.1 420.7 751.9 426.9 749.4 432.4 746.6 434.2 745.9 385.3 717.7 385 717.8 377.8 713.7 377.8 713.7 371 709.7 371.2 709.5 316.5 677.9ZM439.1 786.7 455.6 792.9 462.6 790.4 469.3 787.9 475.7 785.2 481.7 782.3 487.2 779.3 489.6 777.9 439.1 748.8ZM516.8 801.8 517.1 806.5 517.8 811.2 536.1 815.2 542.1 812 545.3 810.1 516.8 793.6ZM800 819.7 800.5 818.2 797.3 820.1ZM846.6 796.4 852.4 799.5 858.6 802.4 865.1 805.3 882.7 800.1 882.7 770.8 842.5 794ZM901.6 763.8 907.3 766.6 913.3 769.2 919.8 771.7 926.6 774 933.7 776.2 941.1 778.2 956.4 771.1 956.4 731 961.9 733.2 968.4 735.3 975.3 737.2 982.5 738.8 990 740.2 997.8 741.5 1005.7 742.6 1018.1 733.8 1018.1 697.5 1024.4 698.4 1032 699.1 1039.9 699.6 1047.9 699.9 1056.1 700 1065 689.9 1065 665.6 898.4 761.8ZM1090 652.3 1090.7 650.7 1087.5 652.6Z" fill="url(#stripe3)"/>
<path d="M61.6 530.8L680 887.8L1298.4 530.8" fill="none" stroke="#d8d8c4" stroke-opacity=".3" stroke-width="1"/>
<path d="M679.500 889V939" stroke="#e6e6d8" stroke-opacity=".55" stroke-width="1"/><circle cx="680.9" cy="173.4" r="3.700" fill="#fbfbf4" fill-opacity=".72" stroke="#77776f" stroke-width="1.100"/><circle cx="680.9" cy="199.9" r="3.700" fill="#fbfbf4" fill-opacity=".72" stroke="#77776f" stroke-width="1.100"/><circle cx="680.9" cy="226.2" r="3.700" fill="#fbfbf4" fill-opacity=".72" stroke="#77776f" stroke-width="1.100"/><circle cx="61.5" cy="531.6" r="3.700" fill="#fbfbf4" fill-opacity=".72" stroke="#77776f" stroke-width="1.100"/><circle cx="61.5" cy="557.5" r="3.700" fill="#fbfbf4" fill-opacity=".72" stroke="#77776f" stroke-width="1.100"/><circle cx="61.5" cy="583.7" r="3.700" fill="#fbfbf4" fill-opacity=".72" stroke="#77776f" stroke-width="1.100"/><circle cx="679.5" cy="887.9" r="3.700" fill="#fbfbf4" fill-opacity=".72" stroke="#77776f" stroke-width="1.100"/><circle cx="679.5" cy="913.8" r="3.700" fill="#fbfbf4" fill-opacity=".72" stroke="#77776f" stroke-width="1.100"/><circle cx="679.5" cy="940.0" r="3.700" fill="#fbfbf4" fill-opacity=".72" stroke="#77776f" stroke-width="1.100"/><circle cx="371.8" cy="352.0" r="3.700" fill="#fbfbf4" fill-opacity=".72" stroke="#77776f" stroke-width="1.100"/><circle cx="371.8" cy="378.2" r="3.700" fill="#fbfbf4" fill-opacity=".72" stroke="#77776f" stroke-width="1.100"/><circle cx="371.8" cy="404.3" r="3.700" fill="#fbfbf4" fill-opacity=".72" stroke="#77776f" stroke-width="1.100"/><circle cx="989.6" cy="351.9" r="3.700" fill="#fbfbf4" fill-opacity=".72" stroke="#77776f" stroke-width="1.100"/><circle cx="989.6" cy="378.2" r="3.700" fill="#fbfbf4" fill-opacity=".72" stroke="#77776f" stroke-width="1.100"/><circle cx="989.6" cy="404.3" r="3.700" fill="#fbfbf4" fill-opacity=".72" stroke="#77776f" stroke-width="1.100"/><circle cx="371.7" cy="709.3" r="3.700" fill="#fbfbf4" fill-opacity=".72" stroke="#77776f" stroke-width="1.100"/><circle cx="371.7" cy="735.4" r="3.700" fill="#fbfbf4" fill-opacity=".72" stroke="#77776f" stroke-width="1.100"/><circle cx="371.7" cy="761.5" r="3.700" fill="#fbfbf4" fill-opacity=".72" stroke="#77776f" stroke-width="1.100"/><circle cx="989.5" cy="709.3" r="3.700" fill="#fbfbf4" fill-opacity=".72" stroke="#77776f" stroke-width="1.100"/><circle cx="989.5" cy="735.4" r="3.700" fill="#fbfbf4" fill-opacity=".72" stroke="#77776f" stroke-width="1.100"/><circle cx="989.5" cy="761.5" r="3.700" fill="#fbfbf4" fill-opacity=".72" stroke="#77776f" stroke-width="1.100"/><circle cx="680.0" cy="557.3" r="3.700" fill="#fbfbf4" fill-opacity=".72" stroke="#77776f" stroke-width="1.100"/><circle cx="680.0" cy="583.4" r="3.700" fill="#fbfbf4" fill-opacity=".72" stroke="#77776f" stroke-width="1.100"/><path d="M680 520V465" stroke="#1414f0" stroke-width="5.500"/><path d="M680 455l-5.500 16h11z" fill="#1414f0"/><circle cx="680" cy="469" r="3.300" fill="#3c3cf5"/><path d="M690 525L728 503" stroke="#22e022" stroke-width="5.500"/><path d="M746 493l-17.500 2.500 6 10z" fill="#22e022"/><path d="M690 538L730 560" stroke="#f01414" stroke-width="5.500"/><path d="M746 570l-11-14.500-5.500 10.500z" fill="#f01414"/><circle cx="680" cy="531" r="4.600" fill="#fff" stroke="#9a9a92" stroke-width="1.300"/><text x="680" y="445" font-size="11.500" font-weight="bold" font-style="italic" text-anchor="middle" fill="#2a2af0" font-family="Liberation Sans, sans-serif">Z</text><text x="757" y="490" font-size="11" font-weight="bold" text-anchor="middle" fill="#3fd63f" font-family="Liberation Sans, sans-serif">Y</text><text x="758" y="580" font-size="11" font-weight="bold" text-anchor="middle" fill="#f03c3c" font-family="Liberation Sans, sans-serif">X</text><path d="M1296.600 244.600L1329.600 224.500L1340 231L1304 250z" fill="#bbb" fill-opacity=".25"/><path d="M1264.1 182.4 L1296.0 169.6 L1330.7 184.7 L1296.6 203.2 z" fill="#f0f0f0" fill-opacity="0.70" stroke="#8a8a8a" stroke-width=".8" stroke-linejoin="round"/><path d="M1264.1 182.4 L1296.6 203.2 L1296.6 244.6 L1265.5 222.8 z" fill="#e8e8e8" fill-opacity="0.70" stroke="#8a8a8a" stroke-width=".8" stroke-linejoin="round"/><path d="M1296.6 203.2 L1330.7 184.7 L1329.6 224.5 L1296.6 244.6 z" fill="#dedede" fill-opacity="0.70" stroke="#8a8a8a" stroke-width=".8" stroke-linejoin="round"/><path d="M1265.500 222.800L1260.700 177.400" stroke="#4a4ae8" stroke-width="2.200"/><path d="M1265.500 222.800L1302.700 249.100" stroke="#d9606a" stroke-width="2.200"/><text x="1259.600" y="175" font-size="13" font-weight="bold" text-anchor="middle" fill="#7b7bf0" font-family="Liberation Sans, sans-serif">Z</text><text x="1307.500" y="257.500" font-size="12" font-weight="bold" text-anchor="middle" fill="#f07a7a" font-family="Liberation Sans, sans-serif">X</text><g transform="matrix(.84,.54,0,1,1271.500,211)"><text x="0" y="0" font-size="19" fill="#8a8a8a" font-family="Liberation Sans, Noto Sans CJK JP, sans-serif">前</text></g><g transform="matrix(.88,-.48,0,1,1304.500,228.500)"><text x="0" y="0" font-size="19" fill="#8a8a8a" font-family="Liberation Sans, Noto Sans CJK JP, sans-serif">右</text></g><g transform="matrix(.84,.54,-.88,.48,1285.400,185.300)"><text x="0" y="0" font-size="15" fill="#777" font-family="Liberation Sans, Noto Sans CJK JP, sans-serif">上</text></g><rect x="0" y="0" width="1360" height="31" fill="#fff"/><defs><linearGradient id="fic" x1="0" y1="0" x2="1" y2="1"><stop offset="0" stop-color="#fde3bd"/><stop offset="1" stop-color="#f9c78a"/></linearGradient></defs><rect x="9" y="8" width="15" height="15" rx="1.5" fill="url(#fic)"/><path d="M13.3 10.6h7.2v2.7h-4.3v1.9h3.6v2.5h-3.6v3.2h-2.9z" fill="#d9730f"/><path d="M18 18.2h3.2v2.6H18z" fill="#f2a24a" opacity=".8"/><text x="30" y="20" font-size="11.6" fill="#959595" font-family="Liberation Sans, sans-serif">Autodesk Fusion 360</text><path d="M1241 15.5h11" stroke="#8a8a8a" stroke-width="1"/><rect x="1286.5" y="10.5" width="10" height="10" fill="none" stroke="#8a8a8a" stroke-width="1"/><path d="M1332 10l11 11M1343 10l-11 11" stroke="#8a8a8a" stroke-width="1"/><rect x="0" y="30" width="1360" height="32" fill="#cdcdcd"/><path d="M193 62V40q0-6 6-6H1129q6 0 6 6V62z" fill="#f0f0f0"/><rect x="0" y="62" width="1360" height="80" fill="#f0f0f0"/><rect x="0" y="141" width="1360" height="1" fill="#dedede"/><rect x="9.5" y="39.5" width="3.6" height="3.6" fill="#555"/><rect x="9.5" y="44.3" width="3.6" height="3.6" fill="#555"/><rect x="9.5" y="49.1" width="3.6" height="3.6" fill="#555"/><rect x="14.3" y="39.5" width="3.6" height="3.6" fill="#555"/><rect x="14.3" y="44.3" width="3.6" height="3.6" fill="#555"/><rect x="14.3" y="49.1" width="3.6" height="3.6" fill="#555"/><rect x="19.1" y="39.5" width="3.6" height="3.6" fill="#555"/><rect x="19.1" y="44.3" width="3.6" height="3.6" fill="#555"/><rect x="19.1" y="49.1" width="3.6" height="3.6" fill="#555"/><path d="M42 38h8l4 4v13H42z" fill="#555"/><path d="M50 38v4h4z" fill="#e8e8e8"/><path d="M60.9 44.0h7.2l-3.6 4.5z" fill="#555"/><path d="M86 39h12l2 2v13H86z" fill="#555"/><rect x="89" y="40" width="7" height="4.5" fill="#cdcdcd"/><rect x="89" y="48" width="8" height="6" fill="#cdcdcd"/><rect x="91" y="49.5" width="2" height="3.5" fill="#555"/><path d="M131 54v-3q0-6-7-6h-1" fill="none" stroke="#555" stroke-width="2.2"/><path d="M118 45l6.5-5.500v11z" fill="#555"/><path d="M139.9 44.0h7.2l-3.6 4.5z" fill="#555"/><path d="M159 54v-3q0-6 7-6h1" fill="none" stroke="#8f8f8f" stroke-width="2.2"/><path d="M172 45l-6.500-5.500v11z" fill="#8f8f8f"/><path d="M179.9 44.0h7.2l-3.6 4.5z" fill="#8f8f8f"/><path d="M626.500 43.500l6.500-3 7.500 2.500v8.500l-6.500 4-7.500-3.500z" fill="#5a5a5a"/><path d="M626.500 43.500l7.500 3v8.500l-7.500-3.500z" fill="#9a9a9a"/><path d="M627 43.5l7 3 6.500-3.500" fill="none" stroke="#bbb" stroke-width=".8"/><path d="M634 46.5v8.500" stroke="#bbb" stroke-width=".8"/><text x="646" y="53.2" font-size="12.5" fill="#222" textLength="23.5" lengthAdjust="spacingAndGlyphs" font-family="Liberation Sans, Noto Sans CJK JP, sans-serif">歯車</text><text x="672.500" y="53" font-size="12.500" fill="#707070" font-family="Liberation Sans, sans-serif">v1*</text><path d="M1120 43l8.500 8.500M1128.500 43l-8.500 8.500" stroke="#444" stroke-width="1.400"/><rect x="1138" y="32" width="30" height="30" fill="#bcbcbc"/><path d="M1147 47h13M1153.500 40.500v13" stroke="#666" stroke-width="2.400"/><rect x="1171" y="31" width="32" height="31" fill="#0d98e0"/><circle cx="1187" cy="46.500" r="7.300" fill="none" stroke="#fff" stroke-width="2.200"/><path d="M1183.500 50l4-4" stroke="#fff" stroke-width="2.400" stroke-linecap="round"/><circle cx="1189" cy="44.500" r="2.600" fill="#fff"/><circle cx="1190.300" cy="43.200" r="1.300" fill="#0d98e0"/><circle cx="1218" cy="46.500" r="7" fill="#555"/><circle cx="1218" cy="46.500" r="4.800" fill="#bdbdbd"/><path d="M1218 43v3.800h3" fill="none" stroke="#444" stroke-width="1.300"/><circle cx="1342" cy="46.500" r="8" fill="#4a4a4a"/><text x="1342" y="51.500" font-size="13.500" font-weight="bold" text-anchor="middle" fill="#e6e6e6" font-family="Liberation Sans, sans-serif">?</text><rect x="17.500" y="72.500" width="92" height="58" rx="4" fill="#f3f3f3" stroke="#dcdcdc" stroke-width="1"/><text x="47" y="105.14" font-size="11.5" font-weight="bold" fill="#222" textLength="21.7" lengthAdjust="spacingAndGlyphs" font-family="Liberation Sans, Noto Sans CJK JP, sans-serif">製造</text><path d="M73.6 99.4h6.8l-3.4 4.2z" fill="#222"/><text x="142" y="75.96" font-size="11" fill="#1b95d6" textLength="35.7" lengthAdjust="spacingAndGlyphs" font-family="Liberation Sans, Noto Sans CJK JP, sans-serif">ミーリング</text><text x="223.2" y="75.96" font-size="11" fill="#3c3c3c" textLength="20.3" lengthAdjust="spacingAndGlyphs" font-family="Liberation Sans, Noto Sans CJK JP, sans-serif">旋盤</text><text x="290" y="75.96" font-size="11" fill="#3c3c3c" textLength="20.3" lengthAdjust="spacingAndGlyphs" font-family="Liberation Sans, Noto Sans CJK JP, sans-serif">積層</text><text x="356.2" y="75.96" font-size="11" fill="#3c3c3c" textLength="72.7" lengthAdjust="spacingAndGlyphs" font-family="Liberation Sans, Noto Sans CJK JP, sans-serif">プローブしています</text><text x="476.2" y="75.96" font-size="11" fill="#3c3c3c" textLength="20.8" lengthAdjust="spacingAndGlyphs" font-family="Liberation Sans, Noto Sans CJK JP, sans-serif">製造</text><text x="543.8" y="75.96" font-size="11" fill="#3c3c3c" textLength="50" lengthAdjust="spacingAndGlyphs" font-family="Liberation Sans, Noto Sans CJK JP, sans-serif">ユーティリティ</text><rect x="131" y="79.800" width="59.300" height="2.800" fill="#1b95d6"/><text x="137.8" y="135.44" font-size="11.5" fill="#333" textLength="42.4" lengthAdjust="spacingAndGlyphs" font-family="Liberation Sans, Noto Sans CJK JP, sans-serif">セットアップ</text><path d="M183.6 129.8h6.6l-3.3 4.1z" fill="#333"/><text x="268" y="135.44" font-size="11.5" fill="#333" textLength="12" lengthAdjust="spacingAndGlyphs" font-family="Liberation Sans, Noto Sans CJK JP, sans-serif">2D</text><path d="M283.4 129.8h6.6l-3.3 4.1z" fill="#333"/><text x="427.5" y="135.44" font-size="11.5" fill="#333" textLength="12.5" lengthAdjust="spacingAndGlyphs" font-family="Liberation Sans, Noto Sans CJK JP, sans-serif">3D</text><path d="M442.5 129.8h6.6l-3.3 4.1z" fill="#333"/><text x="560" y="135.44" font-size="11.5" fill="#333" textLength="21.2" lengthAdjust="spacingAndGlyphs" font-family="Liberation Sans, Noto Sans CJK JP, sans-serif">ドリル</text><path d="M583.2 129.8h6.6l-3.3 4.1z" fill="#333"/><text x="637.5" y="135.44" font-size="11.5" fill="#333" textLength="30" lengthAdjust="spacingAndGlyphs" font-family="Liberation Sans, Noto Sans CJK JP, sans-serif">複合軸</text><path d="M670.9 129.8h6.6l-3.3 4.1z" fill="#333"/><text x="735.5" y="135.44" font-size="11.5" fill="#333" textLength="37" lengthAdjust="spacingAndGlyphs" font-family="Liberation Sans, Noto Sans CJK JP, sans-serif">アクション</text><path d="M776.2 129.8h6.6l-3.3 4.1z" fill="#333"/><text x="842.5" y="135.44" font-size="11.5" fill="#333" textLength="21.3" lengthAdjust="spacingAndGlyphs" font-family="Liberation Sans, Noto Sans CJK JP, sans-serif">管理</text><path d="M865.5 129.8h6.6l-3.3 4.1z" fill="#333"/><text x="900" y="135.44" font-size="11.5" fill="#333" textLength="21.2" lengthAdjust="spacingAndGlyphs" font-family="Liberation Sans, Noto Sans CJK JP, sans-serif">検査</text><path d="M923.0 129.8h6.6l-3.3 4.1z" fill="#333"/><text x="957.5" y="135.44" font-size="11.5" fill="#333" textLength="21.3" lengthAdjust="spacingAndGlyphs" font-family="Liberation Sans, Noto Sans CJK JP, sans-serif">選択</text><path d="M980.5 129.8h6.6l-3.3 4.1z" fill="#333"/><rect x="212.0" y="88" width="1.200" height="48" fill="#dadada"/><rect x="349.4" y="88" width="1.200" height="48" fill="#dadada"/><rect x="528.1" y="88" width="1.200" height="48" fill="#dadada"/><rect x="623.1" y="88" width="1.200" height="48" fill="#dadada"/><rect x="690.6" y="88" width="1.200" height="48" fill="#dadada"/><rect x="827.4" y="88" width="1.200" height="48" fill="#dadada"/><rect x="885.6" y="88" width="1.200" height="48" fill="#dadada"/><rect x="943.1" y="88" width="1.200" height="48" fill="#dadada"/><g transform="translate(144.6,103.4)"><rect x="-18.600" y="-18.600" width="37.200" height="37.200" fill="#0d98e0"/><path d="M-13 -9l4-3h6l2 3h11v4h-23z" fill="#c9c9c9"/><path d="M-7 -6l8-5 9 5-2 9-11 2z" fill="#e3e6ea" stroke="#9fb4c8" stroke-width=".8"/><path d="M-14 12l4-14h24l-4 14z" fill="#d4d4d4" stroke="#b5b5b5" stroke-width=".6"/></g><g transform="translate(186.5,103.8)"><rect x="-13" y="-15.500" width="26" height="31" fill="#f6f6f6" stroke="#5c5c5c" stroke-width="1.2"/><text x="0" y="-2" font-size="12" font-weight="bold" text-anchor="middle" fill="#1f86d6" font-family="Liberation Sans, sans-serif">G</text><path d="M-5 4h13M-5 9.500h13" stroke="#555" stroke-width="1.300"/><rect x="-9.500" y="2.800" width="2.600" height="2.600" fill="#555"/><rect x="-9.500" y="8.200" width="2.600" height="2.600" fill="#555"/></g><g transform="translate(240.1,102.6)"><path d="M-15 3l18-13 13 7-18 14z" fill="#3f97dd"/><path d="M-15 3v4l13 8v-4z" fill="#bdbdbd"/><path d="M-2 11v4l18-14v-4z" fill="#e2e2e2"/><path d="M-12 2l16-11q4-2 5 1t-2 5l-14 10q-4 2-5-1t3-5l13-9" fill="none" stroke="#2a5f96" stroke-width="1.300"/></g><g transform="translate(281.6,103.4)"><path d="M0 -15l16 8v8l-16 13-16-13v-8z" fill="#e4e4e4" stroke="#6a6a6a" stroke-width="1.100"/><path d="M0 -8l10 6-10 9-10-9z" fill="#c4d9ec"/><ellipse cx="0" cy="3" rx="10.500" ry="6" fill="#3f97dd"/><ellipse cx="0" cy="3" rx="6.500" ry="3.200" fill="none" stroke="#2a5f96" stroke-width="1.200"/></g><g transform="translate(324.2,103.4)"><path d="M0 -12l15 10-15 12-15-12z" fill="none" stroke="#3f97dd" stroke-width="1.600"/><path d="M0 -13l12 7v4l-12 8-12-8v-4z" fill="#7db9ea"/><path d="M0 -13l12 7-12 7.500-12-7.500z" fill="#f0f0f0"/></g><g transform="translate(377.5,103.7)"><path d="M-15 -6l8-8h21v20l-8 8h-21z" fill="#dcdcdc" stroke="#6a6a6a" stroke-width="1.100"/><path d="M-15 -6h21l8-8M6 -6v20" fill="none" stroke="#6a6a6a" stroke-width=".9"/><path d="M-6 -10h16v16l-5 3h-12z" fill="#3f97dd"/><path d="M-9 -1q6-5 19-4M-9 5q6-5 19-4M-10 8q4-7 12-9" fill="none" stroke="#234f80" stroke-width="1.200"/></g><g transform="translate(419.5,103.7)"><path d="M-15 -7l9-8h21v20l-8 9h-22z" fill="#d6d6d6" stroke="#6a6a6a" stroke-width="1.100"/><path d="M-15 -7h16q6 0 6-8" fill="none" stroke="#6a6a6a" stroke-width=".9"/><path d="M-14 -6h15q5-1 6-8l6 0v14q-9 5-27 5z" fill="#3f97dd"/><path d="M-13 12q5-2 6-12t5-12 3 6-1 14 4 4 5-16" fill="none" stroke="#234f80" stroke-width="1.200"/></g><g transform="translate(461.7,103.7)"><ellipse cx="0" cy="5" rx="15" ry="7.500" fill="#f2f2f2" stroke="#8a8a8a" stroke-width="1.200"/><path d="M-14.500 3a14.500 14 0 0 1 29 0q-1 5-14.500 5t-14.500-5z" fill="#3f97dd"/><path d="M0 -9l8 8q-8 4-16 0z" fill="none" stroke="#234f80" stroke-width="1.400" stroke-linejoin="round"/><path d="M0 -5l3.500 3.500q-3.500 1.500-7 0z" fill="none" stroke="#234f80" stroke-width="1.100"/></g><g transform="translate(503.7,103.7)"><path d="M-13 8l4-4h22l3 3v5l-4 3h-25z" fill="#d2d2d2" stroke="#8a8a8a" stroke-width=".8"/><path d="M-4 -13q4-3 7 0q2 9 13 14l-4 6h-24q6-8 8-20z" fill="#3f97dd"/><ellipse cx="0" cy="-12.500" rx="3.600" ry="1.800" fill="#e9eef4" stroke="#234f80" stroke-width=".8"/><path d="M-6 -6q6 3 11-1M-8 -1q8 4 16-2M-10 4q10 4 22-4" fill="none" stroke="#234f80" stroke-width="1.200"/></g><g transform="translate(556.2,103.7)"><path d="M-15 5l9-11h21l-8 11z" fill="#ececec" stroke="#777" stroke-width="1"/><path d="M-15 5v4h22v-4zM7 9l8-11v-4" fill="#cfcfcf" stroke="#888" stroke-width=".7"/><defs><linearGradient id="dr" x1="0" x2="1"><stop offset="0" stop-color="#8e8e8e"/><stop offset=".45" stop-color="#e8e8e8"/><stop offset="1" stop-color="#7b7b7b"/></linearGradient></defs><rect x="-5" y="-14" width="10" height="28" rx="4.500" fill="url(#dr)" stroke="#666" stroke-width=".8"/><ellipse cx="0" cy="-11.500" rx="5" ry="2.300" fill="#d9d9d9" stroke="#666" stroke-width=".7"/><rect x="-5" y="1" width="10" height="7" fill="#9cc8ee" fill-opacity=".8" stroke="#3f97dd" stroke-width=".9"/></g><g transform="translate(598.7,102.5)"><path d="M-12 -8h8M-8 -12v8" stroke="#c4c4c4" stroke-width="1.400"/><path d="M-12 6l6-8h14l-4 8zM-2 8v6l4 2 6-4v-5" fill="#e2e2e2" stroke="#d0d0d0" stroke-width=".8"/><circle cx="6" cy="-4.500" r="8.300" fill="#1a94dc"/><path d="M2.500 -1l4.200-4.200" stroke="#fff" stroke-width="2.600" stroke-linecap="round"/><circle cx="8.300" cy="-6.800" r="3" fill="#fff"/><circle cx="9.700" cy="-8.200" r="1.500" fill="#1a94dc"/></g><g transform="translate(657.5,103.7)"><path d="M-16 -5h9l6 14 9-14h8v5l-13 14z" fill="#3f97dd"/><path d="M-16 -5h32" stroke="#555" stroke-width="1.200"/><path d="M3 -1l13-4v6l-9 12z" fill="#dedede" stroke="#999" stroke-width=".6"/><path d="M-9 9l7-15 5 2.500-7 15q-4 1-5-2.500z" fill="#b4b4b4" stroke="#666" stroke-width=".8"/><path d="M-6.500 7l6-3M-4.500 2.500l6-3" stroke="#eee" stroke-width="1.200"/><path d="M-6 -10q1-4 5-4l7 3q2 2 1 5l-3 3-8-3.500z" fill="#ededed" stroke="#777" stroke-width=".9"/></g><g transform="translate(720.0,103.7)"><path d="M-2 -9l14 11-14 12-14-12z" fill="none" stroke="#3f97dd" stroke-width="1.600"/><path d="M-2 -3l7 5-7 6-7-6z" fill="none" stroke="#3f97dd" stroke-width="1.300"/><rect x="-1" y="-13" width="5" height="17" rx="2" fill="#a9a9a9" stroke="#666" stroke-width=".8"/><rect x="-3" y="-16" width="9" height="4.500" rx="1.500" fill="#e4e4e4" stroke="#666" stroke-width=".8"/></g><g transform="translate(760.5,103.7)"><rect x="-13" y="-15.500" width="26" height="31" fill="#f6f6f6" stroke="#5c5c5c" stroke-width="1.200"/><text x="0" y="-1.200" font-size="11.500" font-weight="bold" text-anchor="middle" fill="#1f86d6" font-family="Liberation Mono, monospace">G1</text><text x="0" y="10" font-size="11.500" font-weight="bold" text-anchor="middle" fill="#1f86d6" font-family="Liberation Mono, monospace">G2</text></g><g transform="translate(803.0,103.7)"><rect x="-11.500" y="-14" width="23" height="28" fill="#f6f6f6" stroke="#5c5c5c" stroke-width="1.200"/><rect x="-6.500" y="-10" width="13" height="5" fill="#e4e4e4" stroke="#555" stroke-width="1"/><path d="M-6.500 0h13M-6.500 4.500h13M-6.500 9h13" stroke="#666" stroke-width="1.200"/></g><g transform="translate(857.5,103.7)"><path d="M-15 -13h9l3 4h18v22h-30z" fill="#f0f0f0" stroke="#8a8a8a" stroke-width="1.300"/><path d="M-15 -9h12" stroke="#8a8a8a" stroke-width="1"/><rect x="-2.500" y="-3" width="5.500" height="14" rx="1.500" fill="#a5a5a5" stroke="#666" stroke-width=".8"/><rect x="-4.500" y="-7" width="9.500" height="5" rx="1.500" fill="#dedede" stroke="#666" stroke-width=".8"/></g><g transform="translate(915.5,103.7)"><path d="M-13 -7v8M13 -7v8M-12 -3h24" stroke="#555" stroke-width="1.100"/><path d="M-12 -3l3.500-2v4zM12 -3l-3.500-2v4z" fill="#555"/><rect x="-13.500" y="3.500" width="27" height="6" fill="#f5a800"/><path d="M-11 3.500v2.500M-8 3.500v2.500M-5 3.500v2.500M-2 3.500v2.500M1 3.500v2.500M4 3.500v2.500M7 3.500v2.500M10 3.500v2.500" stroke="#a36d00" stroke-width=".7"/></g><g transform="translate(971.2,101.2)"><rect x="-13.500" y="-12" width="27" height="20.500" fill="none" stroke="#4caf6a" stroke-width="1.200" stroke-dasharray="3.500 2"/></g><path transform="translate(978.7,103.7) scale(1.00)" d="M0 0v13l3-3 2.200 5 2-0.900-2.200-4.900h4z" fill="#fff" stroke="#333" stroke-width="1" stroke-linejoin="round"/><rect x="5.500" y="146.500" width="387" height="22.500" fill="#f1f1f1" stroke="#d9d9d9" stroke-width="1"/><path d="M9.500 158l4.500-3.200v6.400zM15 158l4.500-3.200v6.400z" fill="#333"/><text x="28.5" y="161.76" font-size="11" fill="#444" textLength="31.8" lengthAdjust="spacingAndGlyphs" font-family="Liberation Sans, Noto Sans CJK JP, sans-serif">ブラウザ</text><circle cx="376" cy="158" r="4.600" fill="#2a2a2a"/><rect x="373.200" y="157.300" width="5.600" height="1.500" fill="#f1f1f1"/><path d="M387.800 152v12M390 152v12" stroke="#9a9a9a" stroke-width="1"/><rect x="38" y="175" width="116" height="20" rx="2" fill="#f3f3f3" fill-opacity=".82"/><rect x="58" y="199" width="83" height="20" rx="2" fill="#f3f3f3" fill-opacity=".82"/><rect x="58" y="222" width="120" height="20" rx="2" fill="#f3f3f3" fill-opacity=".82"/><rect x="58" y="245.500" width="88" height="20" rx="2" fill="#f3f3f3" fill-opacity=".82"/><rect x="58" y="268" width="60" height="20" rx="2" fill="#f3f3f3" fill-opacity=".82"/><path d="M21.500 190.500h10v-11z" fill="#8a8a8a" stroke="#333" stroke-width="1.100" stroke-linejoin="round"/><g transform="translate(50.6,185.0)"><path d="M-7.500 0q7.500-8 15 0q-7.500 8-15 0z" fill="#9a9a9a"/><circle r="2.700" fill="#f0f0f0"/><circle r="1.300" fill="#9a9a9a"/></g><g transform="translate(75.0,185.0)"><path d="M-7 7.500v-11.500q0-3.500 3.500-3.500h2q2.500 0 2.500 2.500v3.500h4l3 3v6z" fill="#f4f4f4" stroke="#555" stroke-width="1.200" stroke-linejoin="round"/><path d="M-1 7.500v-6q0-3 3-3h3" fill="none" stroke="#555" stroke-width="1.100"/></g><text x="97" y="189.16" font-size="11" fill="#333" textLength="48.6" lengthAdjust="spacingAndGlyphs" font-family="Liberation Sans, Noto Sans CJK JP, sans-serif">CAM ルート</text><g transform="translate(68.2,209.0)"><path d="M-6 -7.500h8l4 4v9.500h-12z" fill="#fafafa" stroke="#555" stroke-width="1.100"/><path d="M2 -7.500v4h4" fill="none" stroke="#555" stroke-width="1"/><rect x="-7" y="5.500" width="14" height="2.600" fill="#e8a317"/></g><text x="89.7" y="213.16" font-size="11" fill="#333" textLength="44" lengthAdjust="spacingAndGlyphs" font-family="Liberation Sans, Noto Sans CJK JP, sans-serif">単位: mm</text><path d="M41.500 226.500v11l6-5.500z" fill="#fafafa" stroke="#333" stroke-width="1.200" stroke-linejoin="round"/><g transform="translate(68.2,232.0)"><path d="M-7.500 -6h6l1.500 2h7.500v10.500h-15z" fill="#8f8f8f"/></g><text x="89.7" y="236.16" font-size="11" fill="#333" textLength="80.9" lengthAdjust="spacingAndGlyphs" font-family="Liberation Sans, Noto Sans CJK JP, sans-serif">名前の付いたビュー</text><path d="M41.500 250.100v11l6-5.500z" fill="#fafafa" stroke="#333" stroke-width="1.200" stroke-linejoin="round"/><g transform="translate(68.2,255.6)"><path d="M-7.500 0q7.500-8 15 0q-7.500 8-15 0z" fill="#9a9a9a"/><circle r="2.700" fill="#f0f0f0"/><circle r="1.300" fill="#9a9a9a"/></g><g transform="translate(92.6,255.6)"><path d="M-7 7.500v-11.500q0-3.500 3.500-3.500h2q2.500 0 2.500 2.500v3.500h4l3 3v6z" fill="#f4f4f4" stroke="#555" stroke-width="1.200" stroke-linejoin="round"/><path d="M-1 7.500v-6q0-3 3-3h3" fill="none" stroke="#555" stroke-width="1.100"/></g><text x="114" y="259.76" font-size="11" fill="#333" textLength="24" lengthAdjust="spacingAndGlyphs" font-family="Liberation Sans, Noto Sans CJK JP, sans-serif">モデル</text><path d="M41.500 272.700v11l6-5.500z" fill="#fafafa" stroke="#333" stroke-width="1.200" stroke-linejoin="round"/><g transform="translate(68.2,278.2)"><path d="M-7 6v-12h5l1.500 2h6v3" fill="none" stroke="#44617e" stroke-width="1.200"/><path d="M-7 6l3-7h12l-3 7z" fill="#e9eef4" stroke="#44617e" stroke-width="1.200" stroke-linejoin="round"/></g><text x="89.7" y="282.36" font-size="11" fill="#333" textLength="20.6" lengthAdjust="spacingAndGlyphs" font-family="Liberation Sans, Noto Sans CJK JP, sans-serif">設定</text><rect x="5.500" y="952.500" width="387" height="23" fill="#f1f1f1" stroke="#d9d9d9" stroke-width="1"/><text x="27.5" y="968.36" font-size="11" fill="#444" textLength="32.5" lengthAdjust="spacingAndGlyphs" font-family="Liberation Sans, Noto Sans CJK JP, sans-serif">コメント</text><circle cx="376" cy="964.800" r="4.600" fill="#2a2a2a"/><path d="M373.200 964.800h5.600M376 962v5.600" stroke="#f1f1f1" stroke-width="1.400"/><path d="M387.800 958.500v12M390 958.500v12" stroke="#9a9a9a" stroke-width="1"/><rect x="519" y="954" width="320" height="23" rx="2" fill="#f6f6f6" fill-opacity=".78"/><g transform="translate(533.0,965.5)"><path d="M0 -8v16M-3 -5l3-3.500 3 3.500" fill="none" stroke="#4a4a4a" stroke-width="1.600"/><ellipse cx="0" cy="2" rx="8" ry="3.200" fill="none" stroke="#4a4a4a" stroke-width="1.600"/><path d="M-8.500 1l-1 4.500 4.500-.5z" fill="#4a4a4a"/></g><path d="M545.4 964.1h5.2l-2.6 3.2z" fill="#333"/><g transform="translate(564.8,966.0)"><rect x="-7.500" y="-4" width="15" height="11" fill="#fff" stroke="#4a4a4a" stroke-width="1.600"/><rect x="-4" y="-.5" width="8" height="4" fill="#8a8a8a"/><path d="M-5 -4.500l2.500-3.500 2 2.500M2 -5l2-3 2.500 3.500" fill="none" stroke="#4a4a4a" stroke-width="1.300"/></g><g transform="translate(590.8,965.5)"><path d="M-5.500 8q-3-4-4-8 1.500-1.500 3 1v-8q1.500-1.500 2.500 0v-2q1.500-1.500 2.800 0v1.500q1.500-1.200 2.700 .3v2q1.500-1 2.500 .5v7q0 4-2.500 6z" fill="#fff" stroke="#4a4a4a" stroke-width="1.200" stroke-linejoin="round"/></g><g transform="translate(615.7,965.5)"><circle cx="-2" cy="-1" r="5.500" fill="#eef6f2" stroke="#4a4a4a" stroke-width="1.700"/><path d="M2 3.500l5.500 5.500" stroke="#4a4a4a" stroke-width="2.600"/><path d="M5 -7h5M7.500 -9.500v5M5 -2h5" stroke="#4a4a4a" stroke-width="1.100"/></g><g transform="translate(641.6,965.5)"><rect x="-9" y="-8" width="16" height="15" fill="none" stroke="#666" stroke-width="1" stroke-dasharray="2 1.600"/><circle cx="-1.500" cy="-1" r="6" fill="#e4f0ea" stroke="#4a4a4a" stroke-width="1.700"/><path d="M3 3.800l5.500 5.500" stroke="#4a4a4a" stroke-width="2.800"/></g><path d="M654.1 964.1h5.2l-2.6 3.2z" fill="#333"/><g transform="translate(682.0,965.0)"><rect x="-8.500" y="-7.500" width="17" height="12" fill="#cfe0f4" stroke="#555" stroke-width="1.600"/><rect x="-5.500" y="-4.800" width="11" height="6.600" fill="#8fb6e8"/><path d="M-2.500 5v2.500h5v-2.500M-5 8h10" fill="none" stroke="#777" stroke-width="1.300"/></g><path d="M691.9 964.1h5.2l-2.6 3.2z" fill="#333"/><g transform="translate(712.3,965.5)"><rect x="-8" y="-8" width="16" height="16" fill="#dfe6ee"/><path d="M-8.0 -8v16M-4.8 -8v16M-1.6 -8v16M1.6 -8v16M4.8 -8v16M8.0 -8v16M-8 -8.0h16M-8 -4.8h16M-8 -1.6h16M-8 1.6h16M-8 4.8h16M-8 8.0h16" stroke="#555" stroke-width="1"/></g><path d="M721.9 964.1h5.2l-2.6 3.2z" fill="#333"/><g transform="translate(748.8,966.0)"><path d="M-8 -3l4-4h12v11l-4 4h-12z" fill="#dfe8f2" stroke="#444" stroke-width="1.300" stroke-linejoin="round"/><path d="M-8 -3h12v11M4 -3l4-4" fill="none" stroke="#444" stroke-width="1.100"/><circle cx="-2" cy="2.500" r="2.800" fill="#8fb6e8" stroke="#345" stroke-width=".9"/></g><path d="M760.0 964.1h5.2l-2.6 3.2z" fill="#333"/><g transform="translate(780.0,965.5)"><path d="M-8 -5h16M-8 0h16M-8 5h16" stroke="#3d6fb0" stroke-width="3"/><path d="M-9 -5h18M-9 0h18M-9 5h18" stroke="#223" stroke-width=".8" transform="translate(0,1.900)"/></g><path d="M789.9 964.1h5.2l-2.6 3.2z" fill="#333"/><g transform="translate(809.7,965.5)"><path d="M-7 -1a7 7 0 0 1 12.500-3.500M7 1a7 7 0 0 1-12.500 3.500" fill="none" stroke="#2f7fd0" stroke-width="2.400"/><path d="M7.500 -8v6h-6zM-7.500 8v-6h6z" fill="#2f7fd0"/></g><path d="M820.8 964.1h5.2l-2.6 3.2z" fill="#333"/><rect x="1110.8" y="263.9" width="243.6" height="401.0" fill="#f0f0f0" stroke="#d2d2d2" stroke-width="1"/><path d="M1113 269v13M1115.200 269v13" stroke="#a8a8a8" stroke-width=".8"/><circle cx="1126.300" cy="275.400" r="4.600" fill="#2a2a2a"/><rect x="1123.500" y="274.700" width="5.600" height="1.500" fill="#f0f0f0"/><text x="1134.7" y="279.56" font-size="11" fill="#444" textLength="101.5" lengthAdjust="spacingAndGlyphs" font-family="Liberation Sans, Noto Sans CJK JP, sans-serif">セットアップ : セットアップ 1</text><path d="M1341 272.200l4.200 3.200-4.200 3.200zM1346 272.200l4.200 3.200-4.200 3.200z" fill="#222"/><path d="M1110.8 287.800H1354.400" stroke="#d6d6d6" stroke-width="1"/><path d="M1192.200 314.600H1354.400" stroke="#cfcfcf" stroke-width="1"/><path d="M1111.300 314.600V289.500H1192.200V314.600" fill="#f0f0f0" stroke="#d0d0d0" stroke-width="1"/><path d="M1256.400 291v22M1339.200 291v22" stroke="#d6d6d6" stroke-width="1"/><g transform="translate(1125.3,302.6)"><path d="M-6 -2l3-4h9v8l-3 4h-9z" fill="#f4f8fc" stroke="#3b6ea5" stroke-width="1.200" stroke-linejoin="round"/><path d="M-6 -2h9v8M3 -2l3-4" fill="none" stroke="#3b6ea5" stroke-width="1"/></g><text x="1139.6" y="305.16" font-size="11" fill="#444" textLength="42.2" lengthAdjust="spacingAndGlyphs" font-family="Liberation Sans, Noto Sans CJK JP, sans-serif">セットアップ</text><g transform="translate(1206.1,302.2)"><path d="M-6.500 -3l3-3.500h10v9l-3 4h-10z" fill="#e8c520" stroke="#c9a60e" stroke-width=".8" stroke-linejoin="round"/><path d="M-6.500 -3h10l3-3.500" fill="#f6df62" stroke="#c9a60e" stroke-width=".6"/><path d="M3.500 -3v9.500" stroke="#c9a60e" stroke-width=".8"/></g><text x="1220" y="305.16" font-size="11" fill="#444" textLength="26.8" lengthAdjust="spacingAndGlyphs" font-family="Liberation Sans, Noto Sans CJK JP, sans-serif">ストック</text><g transform="translate(1270.3,302.0)"><rect x="-6" y="-7.500" width="12" height="15" fill="#dcebfb" stroke="#444" stroke-width="1.200"/><path d="M-3.500 -4.500h3v3h-3zM.8 -4.500h3v3h-3zM-3.500 .5h3v3h-3zM.8 .5h3v3h-3z" fill="#4d9be6"/></g><text x="1284.2" y="305.16" font-size="11" fill="#444" textLength="44" lengthAdjust="spacingAndGlyphs" font-family="Liberation Sans, Noto Sans CJK JP, sans-serif">ポスト処理</text><path d="M1120.300 327.800h7.600l-3.800 5.400z" fill="#222"/><text x="1135.3" y="334.36" font-size="11" font-weight="bold" fill="#222" textLength="47.1" lengthAdjust="spacingAndGlyphs" font-family="Liberation Sans, Noto Sans CJK JP, sans-serif">セットアップ</text><path d="M1120.300 396.800h7.600l-3.800 5.400z" fill="#222"/><text x="1134.2" y="403.36" font-size="11" font-weight="bold" fill="#222" textLength="95.2" lengthAdjust="spacingAndGlyphs" font-family="Liberation Sans, Noto Sans CJK JP, sans-serif">ワーク座標系(WCS)</text><path d="M1120.300 523.900h7.600l-3.800 5.400z" fill="#222"/><text x="1134" y="530.46" font-size="11" font-weight="bold" fill="#222" textLength="26.9" lengthAdjust="spacingAndGlyphs" font-family="Liberation Sans, Noto Sans CJK JP, sans-serif">モデル</text><text x="1123.1" y="363.76" font-size="11" fill="#333" textLength="43.4" lengthAdjust="spacingAndGlyphs" font-family="Liberation Sans, Noto Sans CJK JP, sans-serif">操作タイプ</text><rect x="1180.800" y="348.7" width="159.700" height="23.6" fill="#fff" stroke="#e2e2e2" stroke-width="1"/><text x="1186.6" y="364.66" font-size="11" fill="#333" textLength="36.4" lengthAdjust="spacingAndGlyphs" font-family="Liberation Sans, Noto Sans CJK JP, sans-serif">ミーリング</text><path d="M1330.0 359.4h5.2l-2.6 3.2z" fill="#333"/><text x="1123.1" y="432.86" font-size="11" fill="#333" textLength="19.7" lengthAdjust="spacingAndGlyphs" font-family="Liberation Sans, Noto Sans CJK JP, sans-serif">方向</text><rect x="1180.800" y="417.2" width="159.700" height="23.5" fill="#fff" stroke="#e2e2e2" stroke-width="1"/><text x="1186.6" y="433.11" font-size="11" fill="#333" textLength="53.2" lengthAdjust="spacingAndGlyphs" font-family="Liberation Sans, Noto Sans CJK JP, sans-serif">モデルの向き</text><path d="M1330.0 427.8h5.2l-2.6 3.2z" fill="#333"/><text x="1123.1" y="461.76" font-size="11" fill="#333" textLength="19.7" lengthAdjust="spacingAndGlyphs" font-family="Liberation Sans, Noto Sans CJK JP, sans-serif">原点</text><rect x="1180.800" y="446.0" width="159.700" height="24.0" fill="#fff" stroke="#e2e2e2" stroke-width="1"/><text x="1186.6" y="462.16" font-size="11" fill="#333" textLength="72.7" lengthAdjust="spacingAndGlyphs" font-family="Liberation Sans, Noto Sans CJK JP, sans-serif">ストック ボックス点</text><path d="M1330.0 456.9h5.2l-2.6 3.2z" fill="#333"/><text x="1122.4" y="491.96" font-size="11" fill="#333" textLength="38.5" lengthAdjust="spacingAndGlyphs" font-family="Liberation Sans, Noto Sans CJK JP, sans-serif">ストック点</text><rect x="1180.200" y="474.600" width="67.600" height="25.700" fill="#0d98e0"/><path transform="translate(1187.6,480.5) scale(0.90)" d="M0 0v13l3-3 2.200 5 2-0.900-2.200-4.900h4z" fill="#fff" stroke="#444" stroke-width="1" stroke-linejoin="round"/><text x="1201.2" y="491.96" font-size="11" fill="#fff" textLength="39.4" lengthAdjust="spacingAndGlyphs" font-family="Liberation Sans, Noto Sans CJK JP, sans-serif">ボックス点</text><text x="1122.4" y="560.26" font-size="11" fill="#333" textLength="24.2" lengthAdjust="spacingAndGlyphs" font-family="Liberation Sans, Noto Sans CJK JP, sans-serif">モデル</text><rect x="1181" y="544" width="49.600" height="24.200" fill="#fff" stroke="#e4e4e4" stroke-width="1"/><path transform="translate(1187.6,549.2) scale(0.90)" d="M0 0v13l3-3 2.200 5 2-0.900-2.200-4.900h4z" fill="#fff" stroke="#444" stroke-width="1" stroke-linejoin="round"/><text x="1200.8" y="560.26" font-size="11" fill="#333" textLength="23.1" lengthAdjust="spacingAndGlyphs" font-family="Liberation Sans, Noto Sans CJK JP, sans-serif">ボディ</text><path d="M1242.500 552.800l7 7M1249.500 552.800l-7 7" stroke="#444" stroke-width="1.800"/><defs><linearGradient id="cbx" x1="0" y1="0" x2="0" y2="1"><stop offset="0" stop-color="#d8d8d8"/><stop offset="1" stop-color="#fafafa"/></linearGradient></defs><rect x="1122" y="589" width="12" height="12" rx="2" fill="url(#cbx)" stroke="#9c9c9c" stroke-width="1"/><text x="1140.3" y="598.96" font-size="11" font-weight="bold" fill="#222" textLength="33.2" lengthAdjust="spacingAndGlyphs" font-family="Liberation Sans, Noto Sans CJK JP, sans-serif">固定具</text><path d="M1110.8 629.800H1354.400" stroke="#dadada" stroke-width="1"/><circle cx="1124.600" cy="647.700" r="5.800" fill="#111"/><rect x="1123.800" y="646.800" width="1.700" height="4" fill="#fff"/><rect x="1123.800" y="644.200" width="1.700" height="1.700" fill="#fff"/><rect x="1216.500" y="638.500" width="57.700" height="17.900" fill="#e4e4e4" stroke="#c4c4c4" stroke-width="1"/><text x="1245.300" y="652" font-size="12" text-anchor="middle" fill="#8e8e8e" font-family="Liberation Sans, sans-serif">OK</text><rect x="1284.800" y="638.500" width="57.700" height="17.900" fill="#e8e8e8" stroke="#c4c4c4" stroke-width="1"/><text x="1289.9" y="651.84" font-size="11.5" fill="#555" textLength="45.6" lengthAdjust="spacingAndGlyphs" font-family="Liberation Sans, Noto Sans CJK JP, sans-serif">キャンセル</text><rect x="1116.600" y="342.5" width="230" height="33.4" rx="5.500" fill="none" stroke="#e8161f" stroke-width="3.3"/><rect x="1116.600" y="411.0" width="230" height="93.6" rx="5.500" fill="none" stroke="#e8161f" stroke-width="3.3"/><rect x="1116.600" y="539.0" width="230" height="33.9" rx="5.500" fill="none" stroke="#e8161f" stroke-width="3.3"/><path d="M.5 982V.5H1359.500V981.500H0" fill="none" stroke="#2e2e2e" stroke-width="1"/><rect x="0" y="0" width="1360" height="1" fill="#3a3a3a"/></svg></body></html>
